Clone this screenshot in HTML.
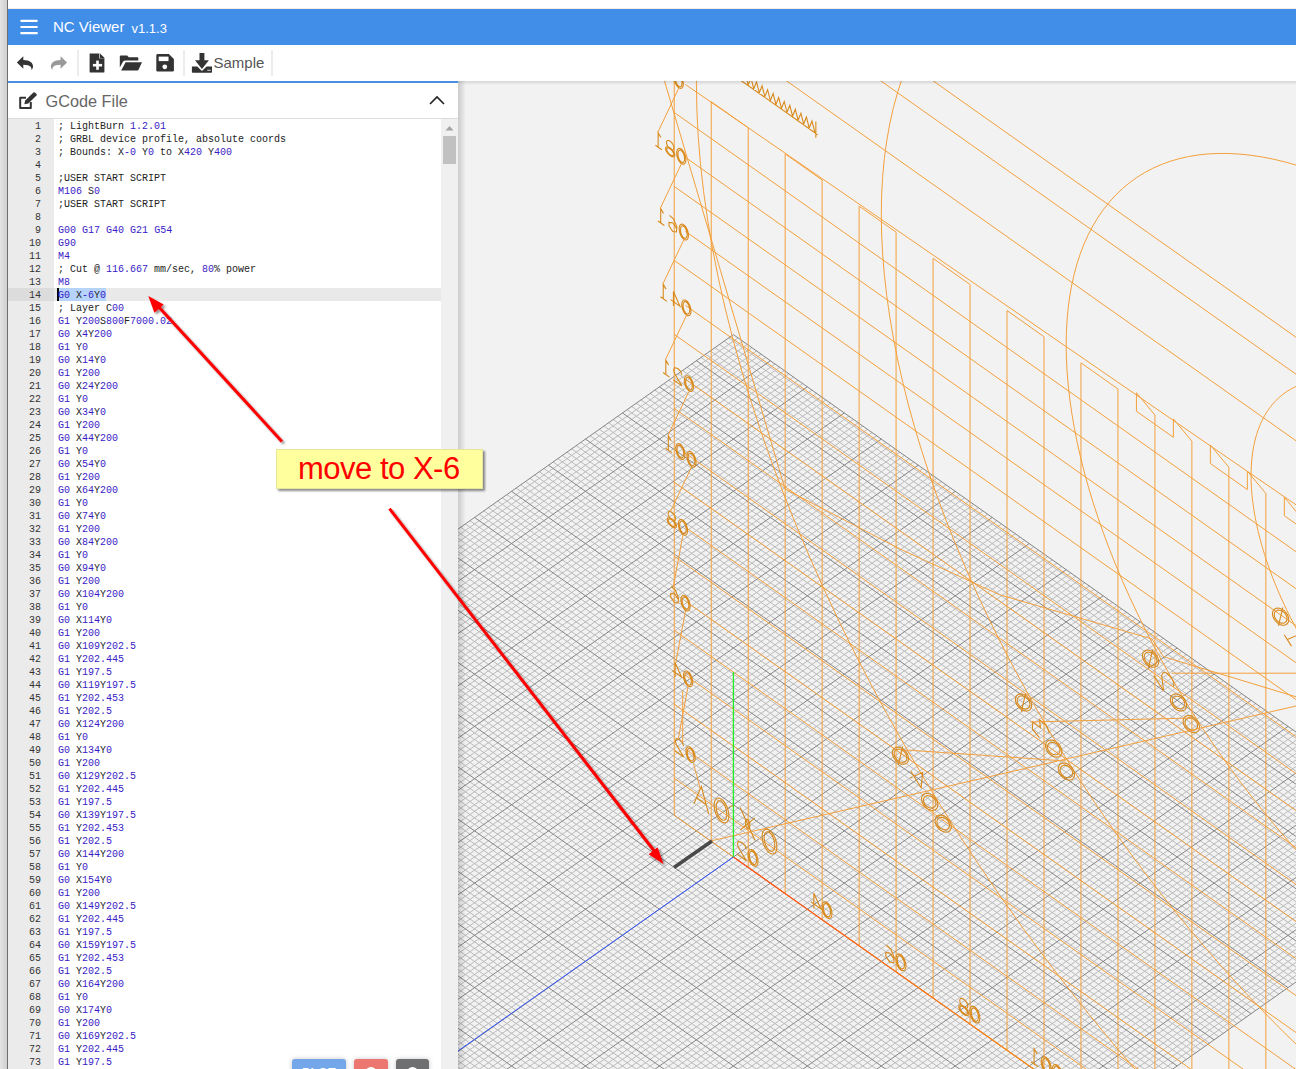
<!DOCTYPE html>
<html><head><meta charset="utf-8">
<style>
*{box-sizing:border-box}
html,body{margin:0;padding:0}
body{width:1296px;height:1069px;overflow:hidden;position:relative;background:#fff;font-family:"Liberation Sans",sans-serif}
.abs{position:absolute}
#strip{left:0;top:0;width:7px;height:1069px;background:linear-gradient(to right,#e4e4e4,#cfcfcf)}
#vline{left:7px;top:0;width:1px;height:1069px;background:#6e6e6e}
#header{left:8px;top:9px;width:1288px;height:36px;background:#418ee9}
#topw{left:8px;top:8px;width:1288px;height:1px;background:#f3ece4}
#toolbar{left:8px;top:45px;width:1288px;height:36px;background:#fff}
#view{left:0;top:0;width:1296px;height:1069px}
#panel{left:8px;top:81px;width:450px;height:988px;background:#fff;border-top:2px solid #4a90e2;}
#phead{left:0;top:0;width:450px;height:36px;border-bottom:1px solid #ddd}
#gutter{left:0;top:36px;width:46px;height:952px;background:#ebebeb}
#code{left:0;top:36px;width:433px;height:952px;overflow:hidden;font-family:"Liberation Mono",monospace;font-size:10px;color:#222}
#code div{height:13px;line-height:13px;position:relative;white-space:pre}
#code .ln{position:absolute;left:0;top:1px;width:33px;text-align:right;color:#333}
#code .tx{position:absolute;left:50px;top:1px}
#code b{font-weight:normal;color:#3a1cc6}
#code .act{background:#e9e9e9}
#code .act .ln{background:#dcdcdc;width:46px;padding-right:13px;top:0;height:13px;line-height:15px}
.sel{position:absolute;left:50px;top:0;width:48px;height:13px;background:#b6d3fb}
.cur{position:absolute;left:49px;top:0;width:1.5px;height:13px;background:#000}
#sbar{left:433px;top:36px;width:17px;height:952px;background:#f0f0f0}
#thumb{left:2px;top:17px;width:13px;height:28px;background:#c1c1c1}
.btn{top:976px;height:20px;border-radius:3px;box-shadow:0 0 5px rgba(0,0,0,0.22);overflow:hidden}
</style></head><body>
<div id="strip" class="abs"></div>
<div id="vline" class="abs"></div>
<div id="topw" class="abs"></div>
<div id="header" class="abs">
  <svg class="abs" style="left:11px;top:9px" width="22" height="20" viewBox="0 0 22 20"><g stroke="#fff" stroke-width="2.2" stroke-linecap="round"><path d="M2.3 2.8H17.8M2.3 9H17.8M2.3 15.2H17.8"/></g></svg>
  <div class="abs" style="left:45px;top:9px;color:#fff;font-size:15px;letter-spacing:0">NC Viewer</div>
  <div class="abs" style="left:123.5px;top:12px;color:#fff;font-size:13px">v1.1.3</div>
</div>
<div id="toolbar" class="abs">
<svg class="abs" style="left:0;top:0" width="300" height="36" viewBox="8 45 300 36">
  <g fill="#333">
   <!-- undo -->
   <path d="M16.9 62.6L23.3 56.3V59.9C29.5 60 33.2 62.5 33 66.8C32.9 68.2 32.2 69.4 31.3 69.9C31.9 67.4 30.7 64.9 23.3 64.8V68.8Z"/>
   <!-- new file -->
   <path d="M89.6 53.4H99.3L104.4 58.5V71.7Q104.4 72.6 103.5 72.6H90.5Q89.6 72.6 89.6 71.7Z"/>
   <!-- folder open -->
   <path d="M119.8 56.5Q119.8 55.4 120.9 55.4H127.2L128.8 57.3H137.5Q138.3 57.3 138.3 58.2V60.4H125.5Q123.8 60.4 123.1 61.6L119.8 67.5Z"/>
   <path d="M125.6 62.3H142L138.5 69.8Q138.2 70.4 137.5 70.4H121.2Z"/>
   <!-- save -->
   <path d="M156.3 55.4Q156.3 54.1 157.6 54.1H168.9L173.9 59V70.3Q173.9 71.6 172.6 71.6H157.6Q156.3 71.6 156.3 70.3Z"/>
   <!-- download -->
   <path d="M199.5 53H204.4V60.2H208.9L201.95 68.9L195 60.2H199.5Z"/>
   <path d="M191.9 66.5H197.3L201.95 71L206.6 66.5H212V72Q212 72.7 211.3 72.7H192.6Q191.9 72.7 191.9 72Z"/>
  </g>
  <g fill="#fff">
   <path d="M99.3 53.4V58.5H104.4Z" fill="#fff"/>
   <path d="M100 53.4L104.4 57.8V58.5H100Z" fill="#333"/>
   <rect x="96.2" y="60.6" width="2.6" height="9.2"/>
   <rect x="92.9" y="63.9" width="9.2" height="2.6"/>
   <rect x="158.7" y="56.6" width="9.8" height="4.5"/>
   <circle cx="164.8" cy="66.8" r="2.4"/>
   <rect x="207.5" y="69.7" width="1.2" height="1.2"/><rect x="209.3" y="69.7" width="1.2" height="1.2"/>
  </g>
  <path d="M67 62.6L60.6 56.3V59.9C54.4 60 50.7 62.5 50.9 66.8C51 68.2 51.7 69.4 52.6 69.9C52 67.4 53.2 64.9 60.6 64.8V68.8Z" fill="#999"/>
  <rect x="77" y="50" width="2" height="26" fill="#ececec"/>
  <rect x="183" y="50" width="2" height="26" fill="#ececec"/>
  <rect x="271" y="50" width="2" height="26" fill="#ececec"/>
  <text x="213.5" y="68" font-family="Liberation Sans" font-size="15" fill="#555">Sample</text>
</svg>
</div>
<svg id="view" class="abs" width="1296" height="1069" viewBox="0 0 1296 1069">
  <defs><clipPath id="vc"><rect x="458" y="81" width="838" height="988"/></clipPath>
  <clipPath id="gc"><path d="M733.4 335L1473 857L733.4 1379L-6.2 857Z"/></clipPath></defs>
  <rect x="458" y="81" width="838" height="988" fill="#f2f2f2"/>
  <g clip-path="url(#vc)">
    <path d="M728.78 337.87L1468.28 860.26M738.02 337.87L-1.48 860.26M724.16 341.13L1463.66 863.53M742.64 341.13L3.14 863.53M719.53 344.39L1459.03 866.79M747.27 344.39L7.77 866.79M714.91 347.66L1454.41 870.06M751.89 347.66L12.39 870.06M710.29 350.92L1449.79 873.33M756.51 350.92L17.01 873.33M705.67 354.19L1445.17 876.59M761.13 354.19L21.63 876.59M701.05 357.45L1440.55 879.86M765.75 357.45L26.25 879.86M691.8 363.98L1431.3 886.38M775 363.98L35.5 886.38M687.18 367.25L1426.68 889.65M779.62 367.25L40.12 889.65M682.56 370.51L1422.06 892.91M784.24 370.51L44.74 892.91M677.94 373.78L1417.44 896.18M788.86 373.78L49.36 896.18M673.32 377.04L1412.82 899.45M793.48 377.04L53.98 899.45M668.69 380.31L1408.19 902.71M798.11 380.31L58.61 902.71M664.07 383.57L1403.57 905.98M802.73 383.57L63.23 905.98M654.83 390.1L1394.33 912.5M811.97 390.1L72.47 912.5M650.21 393.37L1389.71 915.77M816.59 393.37L77.09 915.77M645.58 396.63L1385.08 919.03M821.22 396.63L81.72 919.03M640.96 399.9L1380.46 922.3M825.84 399.9L86.34 922.3M636.34 403.16L1375.84 925.57M830.46 403.16L90.96 925.57M631.72 406.43L1371.22 928.83M835.08 406.43L95.58 928.83M627.1 409.69L1366.6 932.1M839.7 409.69L100.2 932.1M617.85 416.22L1357.35 938.62M848.95 416.22L109.45 938.62M613.23 419.49L1352.73 941.89M853.57 419.49L114.07 941.89M608.61 422.75L1348.11 945.15M858.19 422.75L118.69 945.15M603.99 426.02L1343.49 948.42M862.81 426.02L123.31 948.42M599.37 429.28L1338.87 951.68M867.43 429.28L127.93 951.68M594.74 432.55L1334.24 954.95M872.06 432.55L132.56 954.95M590.12 435.81L1329.62 958.22M876.68 435.81L137.18 958.22M580.88 442.34L1320.38 964.75M885.92 442.34L146.42 964.75M576.26 445.61L1315.76 968.01M890.54 445.61L151.04 968.01M571.63 448.88L1311.13 971.27M895.17 448.88L155.67 971.27M567.01 452.14L1306.51 974.54M899.79 452.14L160.29 974.54M562.39 455.4L1301.89 977.81M904.41 455.4L164.91 977.81M557.77 458.67L1297.27 981.07M909.03 458.67L169.53 981.07M553.15 461.94L1292.65 984.34M913.65 461.94L174.15 984.34M543.9 468.46L1283.4 990.87M922.9 468.46L183.4 990.87M539.28 471.73L1278.78 994.13M927.52 471.73L188.02 994.13M534.66 475L1274.16 997.39M932.14 475L192.64 997.39M530.04 478.26L1269.54 1000.66M936.76 478.26L197.26 1000.66M525.42 481.52L1264.92 1003.92M941.38 481.52L201.88 1003.92M520.79 484.79L1260.29 1007.19M946.01 484.79L206.51 1007.19M516.17 488.06L1255.67 1010.46M950.63 488.06L211.13 1010.46M506.93 494.58L1246.43 1016.99M959.87 494.58L220.37 1016.99M502.31 497.85L1241.81 1020.25M964.49 497.85L224.99 1020.25M497.68 501.12L1237.18 1023.51M969.12 501.12L229.62 1023.51M493.06 504.38L1232.56 1026.78M973.74 504.38L234.24 1026.78M488.44 507.64L1227.94 1030.05M978.36 507.64L238.86 1030.05M483.82 510.91L1223.32 1033.31M982.98 510.91L243.48 1033.31M479.2 514.17L1218.7 1036.58M987.6 514.17L248.1 1036.58M469.95 520.7L1209.45 1043.11M996.85 520.7L257.35 1043.11M465.33 523.97L1204.83 1046.37M1001.47 523.97L261.97 1046.37M460.71 527.24L1200.21 1049.63M1006.09 527.24L266.59 1049.63M456.09 530.5L1195.59 1052.9M1010.71 530.5L271.21 1052.9M451.47 533.76L1190.97 1056.16M1015.33 533.76L275.83 1056.16M446.84 537.03L1186.34 1059.43M1019.96 537.03L280.46 1059.43M442.22 540.3L1181.72 1062.69M1024.58 540.3L285.08 1062.69M432.98 546.83L1172.48 1069.22M1033.82 546.83L294.32 1069.22M428.36 550.09L1167.86 1072.49M1038.44 550.09L298.94 1072.49M423.73 553.36L1163.23 1075.76M1043.07 553.36L303.57 1075.76M419.11 556.62L1158.61 1079.02M1047.69 556.62L308.19 1079.02M414.49 559.88L1153.99 1082.29M1052.31 559.88L312.81 1082.29M409.87 563.15L1149.37 1085.55M1056.93 563.15L317.43 1085.55M405.25 566.41L1144.75 1088.82M1061.55 566.41L322.05 1088.82M396 572.94L1135.5 1095.35M1070.8 572.94L331.3 1095.35M391.38 576.21L1130.88 1098.61M1075.42 576.21L335.92 1098.61M386.76 579.47L1126.26 1101.88M1080.04 579.47L340.54 1101.88M382.14 582.74L1121.64 1105.14M1084.66 582.74L345.16 1105.14M377.52 586L1117.02 1108.4M1089.28 586L349.78 1108.4M372.89 589.27L1112.39 1111.67M1093.91 589.27L354.41 1111.67M368.27 592.53L1107.77 1114.93M1098.53 592.53L359.03 1114.93M359.03 599.07L1098.53 1121.47M1107.77 599.07L368.27 1121.47M354.41 602.33L1093.91 1124.73M1112.39 602.33L372.89 1124.73M349.78 605.6L1089.28 1127.99M1117.02 605.6L377.52 1127.99M345.16 608.86L1084.66 1131.26M1121.64 608.86L382.14 1131.26M340.54 612.12L1080.04 1134.53M1126.26 612.12L386.76 1134.53M335.92 615.39L1075.42 1137.79M1130.88 615.39L391.38 1137.79M331.3 618.65L1070.8 1141.06M1135.5 618.65L396 1141.06M322.05 625.18L1061.55 1147.59M1144.75 625.18L405.25 1147.59M317.43 628.45L1056.93 1150.85M1149.37 628.45L409.87 1150.85M312.81 631.72L1052.31 1154.12M1153.99 631.72L414.49 1154.12M308.19 634.98L1047.69 1157.38M1158.61 634.98L419.11 1157.38M303.57 638.25L1043.07 1160.64M1163.23 638.25L423.73 1160.64M298.94 641.51L1038.44 1163.91M1167.86 641.51L428.36 1163.91M294.32 644.77L1033.82 1167.17M1172.48 644.77L432.98 1167.17M285.08 651.3L1024.58 1173.7M1181.72 651.3L442.22 1173.7M280.46 654.57L1019.96 1176.97M1186.34 654.57L446.84 1176.97M275.83 657.84L1015.33 1180.24M1190.97 657.84L451.47 1180.24M271.21 661.1L1010.71 1183.5M1195.59 661.1L456.09 1183.5M266.59 664.37L1006.09 1186.76M1200.21 664.37L460.71 1186.76M261.97 667.63L1001.47 1190.03M1204.83 667.63L465.33 1190.03M257.35 670.89L996.85 1193.3M1209.45 670.89L469.95 1193.3M248.1 677.42L987.6 1199.83M1218.7 677.42L479.2 1199.83M243.48 680.69L982.98 1203.09M1223.32 680.69L483.82 1203.09M238.86 683.95L978.36 1206.36M1227.94 683.95L488.44 1206.36M234.24 687.22L973.74 1209.62M1232.56 687.22L493.06 1209.62M229.62 690.49L969.12 1212.88M1237.18 690.49L497.68 1212.88M224.99 693.75L964.49 1216.15M1241.81 693.75L502.31 1216.15M220.37 697.01L959.87 1219.41M1246.43 697.01L506.93 1219.41M211.13 703.54L950.63 1225.94M1255.67 703.54L516.17 1225.94M206.51 706.81L946.01 1229.21M1260.29 706.81L520.79 1229.21M201.88 710.08L941.38 1232.47M1264.92 710.08L525.42 1232.47M197.26 713.34L936.76 1235.74M1269.54 713.34L530.04 1235.74M192.64 716.61L932.14 1239.01M1274.16 716.61L534.66 1239.01M188.02 719.87L927.52 1242.27M1278.78 719.87L539.28 1242.27M183.4 723.13L922.9 1245.54M1283.4 723.13L543.9 1245.54M174.15 729.66L913.65 1252.07M1292.65 729.66L553.15 1252.07M169.53 732.93L909.03 1255.33M1297.27 732.93L557.77 1255.33M164.91 736.19L904.41 1258.6M1301.89 736.19L562.39 1258.6M160.29 739.46L899.79 1261.86M1306.51 739.46L567.01 1261.86M155.67 742.73L895.17 1265.12M1311.13 742.73L571.63 1265.12M151.04 745.99L890.54 1268.39M1315.76 745.99L576.26 1268.39M146.42 749.25L885.92 1271.65M1320.38 749.25L580.88 1271.65M137.18 755.78L876.68 1278.18M1329.62 755.78L590.12 1278.18M132.56 759.05L872.06 1281.45M1334.24 759.05L594.74 1281.45M127.93 762.32L867.43 1284.72M1338.87 762.32L599.37 1284.72M123.31 765.58L862.81 1287.98M1343.49 765.58L603.99 1287.98M118.69 768.85L858.19 1291.24M1348.11 768.85L608.61 1291.24M114.07 772.11L853.57 1294.51M1352.73 772.11L613.23 1294.51M109.45 775.38L848.95 1297.78M1357.35 775.38L617.85 1297.78M100.2 781.9L839.7 1304.31M1366.6 781.9L627.1 1304.31M95.58 785.17L835.08 1307.57M1371.22 785.17L631.72 1307.57M90.96 788.43L830.46 1310.84M1375.84 788.43L636.34 1310.84M86.34 791.7L825.84 1314.1M1380.46 791.7L640.96 1314.1M81.72 794.97L821.22 1317.37M1385.08 794.97L645.58 1317.37M77.09 798.23L816.59 1320.63M1389.71 798.23L650.21 1320.63M72.47 801.5L811.97 1323.89M1394.33 801.5L654.83 1323.89M63.23 808.02L802.73 1330.42M1403.57 808.02L664.07 1330.42M58.61 811.29L798.11 1333.69M1408.19 811.29L668.69 1333.69M53.98 814.55L793.48 1336.95M1412.82 814.55L673.32 1336.95M49.36 817.82L788.86 1340.22M1417.44 817.82L677.94 1340.22M44.74 821.09L784.24 1343.49M1422.06 821.09L682.56 1343.49M40.12 824.35L779.62 1346.75M1426.68 824.35L687.18 1346.75M35.5 827.62L775 1350.02M1431.3 827.62L691.8 1350.02M26.25 834.14L765.75 1356.55M1440.55 834.14L701.05 1356.55M21.63 837.41L761.13 1359.81M1445.17 837.41L705.67 1359.81M17.01 840.67L756.51 1363.08M1449.79 840.67L710.29 1363.08M12.39 843.94L751.89 1366.34M1454.41 843.94L714.91 1366.34M7.77 847.21L747.27 1369.61M1459.03 847.21L719.53 1369.61M3.14 850.47L742.64 1372.87M1463.66 850.47L724.16 1372.87M-1.48 853.74L738.02 1376.13M1468.28 853.74L728.78 1376.13" stroke="#bababa" stroke-width="1" fill="none"/>
    <path d="M733.4 334.6L1472.9 857M733.4 334.6L-6.1 857M696.42 360.72L1435.92 883.12M770.38 360.72L30.88 883.12M659.45 386.84L1398.95 909.24M807.35 386.84L67.85 909.24M622.48 412.96L1361.97 935.36M844.32 412.96L104.83 935.36M585.5 439.08L1325 961.48M881.3 439.08L141.8 961.48M548.52 465.2L1288.03 987.6M918.27 465.2L178.77 987.6M511.55 491.32L1251.05 1013.72M955.25 491.32L215.75 1013.72M474.57 517.44L1214.07 1039.84M992.22 517.44L252.73 1039.84M437.6 543.56L1177.1 1065.96M1029.2 543.56L289.7 1065.96M400.62 569.68L1140.12 1092.08M1066.17 569.68L326.68 1092.08M363.65 595.8L1103.15 1118.2M1103.15 595.8L363.65 1118.2M326.68 621.92L1066.17 1144.32M1140.12 621.92L400.62 1144.32M289.7 648.04L1029.2 1170.44M1177.1 648.04L437.6 1170.44M252.73 674.16L992.22 1196.56M1214.07 674.16L474.57 1196.56M215.75 700.28L955.25 1222.68M1251.05 700.28L511.55 1222.68M178.77 726.4L918.27 1248.8M1288.03 726.4L548.52 1248.8M141.8 752.52L881.3 1274.92M1325 752.52L585.5 1274.92M104.83 778.64L844.32 1301.04M1361.97 778.64L622.48 1301.04M67.85 804.76L807.35 1327.16M1398.95 804.76L659.45 1327.16M30.88 830.88L770.38 1353.28M1435.92 830.88L696.42 1353.28M-6.1 857L733.4 1379.4M1472.9 857L733.4 1379.4" stroke="#858585" stroke-width="1" fill="none"/>
    <path d="M1620.8 736.78L1620.69 730.25L1620.35 723.57L1619.79 716.74L1619 709.78L1617.99 702.69L1616.76 695.48L1615.31 688.17L1613.64 680.75L1611.75 673.25L1609.65 665.66L1607.34 658L1604.82 650.28L1602.09 642.5L1599.16 634.68L1596.03 626.82L1592.71 618.94L1589.19 611.05L1585.49 603.14L1581.61 595.25L1577.55 587.36L1573.31 579.5L1568.91 571.67L1564.35 563.88L1559.63 556.15L1554.76 548.47L1549.75 540.87L1544.59 533.34L1539.31 525.9L1533.89 518.57L1528.36 511.33L1522.72 504.22L1516.97 497.22L1511.12 490.37L1505.18 483.65L1499.16 477.08L1493.05 470.67L1486.88 464.42L1480.65 458.35L1474.36 452.45L1468.03 446.75L1461.65 441.23L1455.25 435.92L1448.82 430.82L1442.38 425.93L1435.92 421.26L1429.47 416.81L1423.03 412.6L1416.6 408.62L1410.2 404.88L1403.82 401.39L1397.49 398.15L1391.2 395.16L1384.97 392.42L1378.8 389.95L1372.69 387.74L1366.67 385.8L1360.73 384.13L1354.88 382.72L1349.13 381.59L1343.49 380.73L1337.96 380.15L1332.54 379.84L1327.26 379.81L1322.1 380.05L1317.09 380.57L1312.22 381.37L1307.5 382.44L1302.94 383.78L1298.54 385.39L1294.3 387.27L1290.24 389.42L1286.36 391.83L1282.66 394.5L1279.14 397.43L1275.82 400.62L1272.69 404.05L1269.76 407.73L1267.03 411.66L1264.51 415.82L1262.2 420.21L1260.1 424.83L1258.21 429.67L1256.54 434.72L1255.09 439.99L1253.86 445.46L1252.85 451.12L1252.06 456.97L1251.5 463L1251.16 469.21L1251.05 475.58L1251.16 482.12L1251.5 488.8L1252.06 495.63L1252.85 502.59L1253.86 509.68L1255.09 516.88L1256.54 524.2L1258.21 531.61L1260.1 539.12L1262.2 546.71L1264.51 554.37L1267.03 562.09L1269.76 569.87L1272.69 577.69L1275.82 585.54L1279.14 593.42L1282.66 601.32L1286.36 609.22L1290.24 617.12L1294.3 625.01L1298.54 632.87L1302.94 640.7L1307.5 648.48L1312.22 656.22L1317.09 663.9L1322.1 671.5L1327.26 679.03L1332.54 686.46L1337.96 693.8L1343.49 701.03L1349.13 708.15L1354.88 715.14L1360.73 722L1366.67 728.72L1372.69 735.29L1378.8 741.7L1384.97 747.95L1391.2 754.02L1397.49 759.91L1403.82 765.62L1410.2 771.13L1416.6 776.44L1423.03 781.55L1429.47 786.44L1435.92 791.11L1442.38 795.55L1448.82 799.77L1455.25 803.75L1461.65 807.48L1468.03 810.98L1474.36 814.22L1480.65 817.21L1486.88 819.94L1493.05 822.41L1499.16 824.62L1505.18 826.57L1511.12 828.24L1516.97 829.64L1522.72 830.78L1528.36 831.63L1533.89 832.22L1539.31 832.52L1544.59 832.56L1549.75 832.31L1554.76 831.79L1559.63 831L1564.35 829.93L1568.91 828.59L1573.31 826.98L1577.55 825.1L1581.61 822.95L1585.49 820.54L1589.19 817.86L1592.71 814.93L1596.03 811.75L1599.16 808.31L1602.09 804.63L1604.82 800.71L1607.34 796.55L1609.65 792.15L1611.75 787.54L1613.64 782.7L1615.31 777.64L1616.76 772.38L1617.99 766.91L1619 761.25L1619.79 755.4L1620.35 749.36L1620.69 743.16L1620.8 736.78M1805.67 867.38L1805.45 854.32L1804.77 840.95L1803.65 827.29L1802.08 813.37L1800.06 799.19L1797.6 784.78L1794.69 770.15L1791.35 755.32L1787.58 740.31L1783.38 725.13L1778.75 709.82L1773.71 694.37L1768.25 678.82L1762.39 663.17L1756.14 647.46L1749.49 631.7L1742.46 615.91L1735.06 600.11L1727.29 584.31L1719.17 568.54L1710.7 552.81L1701.9 537.16L1692.77 521.58L1683.34 506.11L1673.6 490.76L1663.57 475.55L1653.26 460.5L1642.69 445.62L1631.86 430.95L1620.8 416.48L1609.51 402.25L1598.01 388.27L1586.32 374.55L1574.44 361.11L1562.39 347.97L1550.18 335.15L1537.84 322.66L1525.38 310.51L1512.8 298.72L1500.13 287.31L1487.38 276.28L1474.57 265.66L1461.72 255.45L1448.83 245.67L1435.92 236.33L1423.02 227.44L1410.13 219.01L1397.28 211.06L1384.47 203.58L1371.72 196.59L1359.05 190.11L1346.47 184.13L1334.01 178.66L1321.67 173.72L1309.46 169.3L1297.41 165.42L1285.53 162.07L1273.84 159.26L1262.34 157L1251.05 155.28L1239.99 154.12L1229.16 153.5L1218.59 153.44L1208.28 153.93L1198.25 154.97L1188.51 156.55L1179.08 158.69L1169.95 161.37L1161.15 164.6L1152.68 168.36L1144.56 172.65L1136.79 177.48L1129.39 182.82L1122.36 188.68L1115.71 195.05L1109.46 201.92L1103.6 209.29L1098.14 217.13L1093.1 225.45L1088.47 234.24L1084.27 243.48L1080.5 253.16L1077.16 263.27L1074.25 273.79L1071.79 284.73L1069.77 296.05L1068.2 307.75L1067.08 319.82L1066.4 332.23L1066.17 344.98L1066.4 358.05L1067.08 371.42L1068.2 385.07L1069.77 399L1071.79 413.17L1074.25 427.59L1077.16 442.22L1080.5 457.05L1084.27 472.06L1088.47 487.23L1093.1 502.55L1098.14 518L1103.6 533.55L1109.46 549.19L1115.71 564.9L1122.36 580.66L1129.39 596.46L1136.79 612.26L1144.56 628.06L1152.68 643.83L1161.15 659.55L1169.95 675.21L1179.08 690.79L1188.51 706.26L1198.25 721.61L1208.28 736.82L1218.59 751.87L1229.16 766.74L1239.99 781.42L1251.05 795.88L1262.34 810.12L1273.84 824.1L1285.53 837.82L1297.41 851.25L1309.46 864.39L1321.67 877.22L1334.01 889.71L1346.47 901.86L1359.05 913.64L1371.72 925.06L1384.47 936.08L1397.28 946.7L1410.13 956.91L1423.02 966.69L1435.92 976.03L1448.83 984.92L1461.72 993.35L1474.57 1001.31L1487.38 1008.79L1500.13 1015.77L1512.8 1022.26L1525.38 1028.24L1537.84 1033.7L1550.18 1038.65L1562.39 1043.06L1574.44 1046.95L1586.32 1050.3L1598.01 1053.1L1609.51 1055.37L1620.8 1057.08L1631.86 1058.25L1642.69 1058.86L1653.26 1058.93L1663.57 1058.44L1673.6 1057.4L1683.34 1055.81L1692.77 1053.68L1701.9 1050.99L1710.7 1047.77L1719.17 1044.01L1727.29 1039.71L1735.06 1034.89L1742.46 1029.55L1749.49 1023.68L1756.14 1017.31L1762.39 1010.44L1768.25 1003.08L1773.71 995.23L1778.75 986.91L1783.38 978.13L1787.58 968.89L1791.35 959.21L1794.69 949.1L1797.6 938.57L1800.06 927.64L1802.08 916.31L1803.65 904.61L1804.77 892.55L1805.45 880.13L1805.67 867.38M1990.55 997.98L1990.21 978.38L1989.2 958.33L1987.51 937.85L1985.15 916.96L1982.12 895.7L1978.43 874.08L1974.08 852.13L1969.06 829.89L1963.4 807.37L1957.1 784.61L1950.16 761.63L1942.6 738.46L1934.42 715.13L1925.63 691.67L1916.24 668.1L1906.27 644.46L1895.73 620.77L1884.63 597.07L1872.98 573.37L1860.79 549.72L1848.09 526.13L1834.89 502.64L1821.2 479.28L1807.04 456.07L1792.43 433.04L1777.39 410.23L1761.93 387.65L1746.07 365.35L1729.83 343.33L1713.24 321.63L1696.31 300.28L1679.06 279.31L1661.51 258.73L1643.69 238.58L1625.62 218.87L1607.31 199.63L1588.8 180.89L1570.1 162.67L1551.24 144.99L1532.23 127.87L1513.11 111.34L1493.9 95.4L1474.61 80.09L1455.28 65.42L1435.92 51.41L1416.57 38.07L1397.24 25.43L1377.95 13.49L1358.74 2.28L1339.62 -8.2L1320.61 -17.93L1301.75 -26.9L1283.05 -35.1L1264.54 -42.51L1246.23 -49.14L1228.16 -54.97L1210.34 -59.99L1192.79 -64.2L1175.54 -67.59L1158.61 -70.17L1142.02 -71.92L1125.78 -72.84L1109.92 -72.93L1094.46 -72.2L1079.42 -70.64L1064.81 -68.26L1050.65 -65.06L1036.96 -61.03L1023.76 -56.2L1011.06 -50.56L998.87 -44.11L987.22 -36.88L976.12 -28.86L965.58 -20.07L955.61 -10.51L946.22 -0.21L937.43 10.84L929.25 22.61L921.69 35.09L914.75 48.27L908.45 62.12L902.79 76.64L897.77 91.81L893.42 107.6L889.73 124L886.7 140.99L884.34 158.54L882.65 176.64L881.64 195.26L881.3 214.38L881.64 233.98L882.65 254.04L884.34 274.52L886.7 295.41L889.73 316.67L893.42 338.29L897.77 360.23L902.79 382.48L908.45 404.99L914.75 427.76L921.69 450.73L929.25 473.9L937.43 497.23L946.22 520.7L955.61 544.26L965.58 567.9L976.12 591.59L987.22 615.3L998.87 638.99L1011.06 662.65L1023.76 686.24L1036.96 709.72L1050.65 733.09L1064.81 756.3L1079.42 779.32L1094.46 802.14L1109.92 824.71L1125.78 847.02L1142.02 869.04L1158.61 890.73L1175.54 912.08L1192.79 933.06L1210.34 953.64L1228.16 973.79L1246.23 993.5L1264.54 1012.73L1283.05 1031.47L1301.75 1049.69L1320.61 1067.38L1339.62 1084.49L1358.74 1101.03L1377.95 1116.96L1397.24 1132.28L1416.57 1146.95L1435.92 1160.96L1455.28 1174.29L1474.61 1186.94L1493.9 1198.87L1513.11 1210.09L1532.23 1220.57L1551.24 1230.29L1570.1 1239.26L1588.8 1247.46L1607.31 1254.88L1625.62 1261.5L1643.69 1267.33L1661.51 1272.35L1679.06 1276.57L1696.31 1279.96L1713.24 1282.53L1729.83 1284.28L1746.07 1285.2L1761.93 1285.3L1777.39 1284.57L1792.43 1283.01L1807.04 1280.63L1821.2 1277.42L1834.89 1273.4L1848.09 1268.56L1860.79 1262.92L1872.98 1256.48L1884.63 1249.24L1895.73 1241.23L1906.27 1232.43L1916.24 1222.88L1925.63 1212.57L1934.42 1201.53L1942.6 1189.76L1950.16 1177.28L1957.1 1164.1L1963.4 1150.24L1969.06 1135.72L1974.08 1120.56L1978.43 1104.77L1982.12 1088.37L1985.15 1071.38L1987.51 1053.83L1989.2 1035.73L1990.21 1017.11L1990.55 997.98M2175.42 1128.58L2174.97 1102.45L2173.62 1075.71L2171.37 1048.4L2168.23 1020.55L2164.19 992.2L2159.27 963.38L2153.46 934.12L2146.78 904.46L2139.23 874.44L2130.83 844.09L2121.58 813.45L2111.49 782.56L2100.58 751.45L2088.86 720.17L2076.35 688.74L2063.06 657.22L2049 625.64L2034.19 594.03L2018.66 562.44L2002.41 530.89L1985.48 499.45L1967.88 468.13L1949.62 436.98L1930.75 406.03L1911.27 375.33L1891.21 344.91L1870.59 314.81L1849.45 285.07L1827.8 255.71L1805.67 226.78L1783.1 198.32L1760.1 170.35L1736.71 142.91L1712.95 116.04L1688.85 89.76L1664.44 64.12L1639.76 39.13L1614.83 14.84L1589.68 -8.74L1564.34 -31.57L1538.84 -53.61L1513.22 -74.86L1487.51 -95.27L1461.73 -114.83L1435.92 -133.52L1410.12 -151.3L1384.34 -168.16L1358.63 -184.07L1333.01 -199.02L1307.51 -212.99L1282.17 -225.97L1257.02 -237.92L1232.09 -248.86L1207.41 -258.74L1183 -267.58L1158.9 -275.35L1135.14 -282.05L1111.75 -287.66L1088.75 -292.19L1066.18 -295.62L1044.05 -297.95L1022.4 -299.18L1001.26 -299.31L980.64 -298.33L960.58 -296.25L941.1 -293.08L922.23 -288.8L903.97 -283.44L886.37 -276.99L869.44 -269.47L853.19 -260.88L837.66 -251.23L822.85 -240.54L808.79 -228.82L795.5 -216.08L782.99 -202.34L771.27 -187.61L760.36 -171.92L750.27 -155.27L741.02 -137.7L732.62 -119.23L725.07 -99.87L718.39 -79.65L712.58 -58.59L707.66 -36.73L703.62 -14.08L700.48 9.33L698.23 33.46L696.88 58.29L696.42 83.78L696.88 109.92L698.23 136.65L700.48 163.96L703.62 191.81L707.66 220.17L712.58 248.99L718.39 278.25L725.07 307.91L732.62 337.93L741.02 368.28L750.27 398.92L760.36 429.81L771.27 460.92L782.99 492.2L795.5 523.62L808.79 555.14L822.85 586.73L837.66 618.34L853.19 649.93L869.44 681.47L886.37 712.92L903.97 744.24L922.23 775.39L941.1 806.33L960.58 837.03L980.64 867.45L1001.26 897.55L1022.4 927.3L1044.05 956.65L1066.17 985.58L1088.75 1014.05L1111.75 1042.02L1135.14 1069.45L1158.9 1096.33L1183 1122.6L1207.41 1148.25L1232.09 1173.24L1257.02 1197.53L1282.17 1221.11L1307.51 1243.93L1333.01 1265.98L1358.63 1287.23L1384.34 1307.64L1410.12 1327.2L1435.92 1345.88L1461.73 1363.66L1487.51 1380.52L1513.22 1396.44L1538.84 1411.39L1564.34 1425.36L1589.68 1438.33L1614.83 1450.29L1639.76 1461.22L1664.44 1471.11L1688.85 1479.94L1712.95 1487.72L1736.71 1494.41L1760.1 1500.03L1783.1 1504.55L1805.67 1507.98L1827.8 1510.31L1849.45 1511.54L1870.59 1511.67L1891.21 1510.7L1911.27 1508.62L1930.75 1505.44L1949.62 1501.17L1967.88 1495.8L1985.48 1489.36L2002.41 1481.83L2018.66 1473.24L2034.19 1463.6L2049 1452.91L2063.06 1441.18L2076.35 1428.44L2088.86 1414.7L2100.58 1399.98L2111.49 1384.28L2121.58 1367.64L2130.83 1350.07L2139.23 1331.59L2146.78 1312.24L2153.46 1292.02L2159.27 1270.96L2164.19 1249.09L2168.23 1226.45L2171.37 1203.04L2173.62 1178.91L2174.97 1154.08L2175.42 1128.58M711.22 841.33L711.22 841.33M711.22 841.33L711.22 101.63M711.22 101.63L748.19 127.75M748.19 127.75L748.19 867.45M748.19 867.45L785.16 893.57M785.16 893.57L785.16 153.87M785.16 153.87L822.14 179.99M822.14 179.99L822.14 919.69M822.14 919.69L859.12 945.81M859.12 945.81L859.12 206.11M859.12 206.11L896.09 232.23M896.09 232.23L896.09 971.93M896.09 971.93L933.06 998.05M933.06 998.05L933.06 258.35M933.06 258.35L970.04 284.47M970.04 284.47L970.04 1024.17M970.04 1024.17L1007.01 1050.29M1007.01 1050.29L1007.01 310.59M1007.01 310.59L1043.99 336.71M1043.99 336.71L1043.99 1076.41M1043.99 1076.41L1080.96 1102.53M1080.96 1102.53L1080.96 362.83M1080.96 362.83L1117.94 388.95M1117.94 388.95L1117.94 1128.65M1117.94 1128.65L1154.91 1154.77M1154.91 1154.77L1154.91 415.07M1154.91 415.07L1136.43 392.76M1136.43 392.76L1136.43 411.25M1136.43 411.25L1173.4 437.37M1173.4 437.37L1173.4 418.88M1173.4 418.88L1191.89 441.19M1191.89 441.19L1191.89 1180.89M1191.89 1180.89L1228.87 1207.01M1228.87 1207.01L1228.87 467.31M1228.87 467.31L1210.38 445M1210.38 445L1210.38 463.49M1210.38 463.49L1247.35 489.61M1247.35 489.61L1247.35 471.12M1247.35 471.12L1265.84 493.43M1265.84 493.43L1265.84 1233.13M1265.84 1233.13L1302.82 1259.25M1302.82 1259.25L1302.82 519.55M1302.82 519.55L1284.33 497.24M1284.33 497.24L1284.33 515.73M1284.33 515.73L1321.3 541.85M1321.3 541.85L1321.3 523.36M1321.3 523.36L1339.79 545.67M1339.79 545.67L1339.79 1285.37M1339.79 1285.37L1376.76 1311.49M1376.76 1311.49L1376.76 571.79M1376.76 571.79L1358.28 549.48M1358.28 549.48L1358.28 567.97M1358.28 567.97L1395.25 594.09M1395.25 594.09L1395.25 575.6M1395.25 575.6L1413.74 597.91M1413.74 597.91L1413.74 1337.61M1413.74 1337.61L1450.71 1363.73M1450.71 1363.73L1450.71 624.03M1450.71 624.03L1432.23 601.72M1432.23 601.72L1432.23 620.21M1432.23 620.21L1469.2 646.33M1469.2 646.33L1469.2 627.84M1469.2 627.84L1487.69 650.15M1487.69 650.15L1487.69 1389.85M1487.69 1389.85L1524.66 1415.97M1524.66 1415.97L1524.66 676.27M1524.66 676.27L1506.18 653.96M1506.18 653.96L1506.18 672.45M1506.18 672.45L1543.15 698.57M1543.15 698.57L1543.15 680.08M1543.15 680.08L1561.64 702.39M1561.64 702.39L1561.64 1442.09M1561.64 1442.09L1598.61 1468.21M1598.61 1468.21L1598.61 728.51M1598.61 728.51L1580.13 706.2M1580.13 706.2L1580.13 724.69M1580.13 724.69L1617.1 750.81M1617.1 750.81L1617.1 732.32M1617.1 732.32L1635.59 754.63M1635.59 754.63L1635.59 1494.33M1635.59 1494.33L1672.57 1520.45M1672.57 1520.45L1672.57 780.75M1672.57 780.75L1654.08 758.44M1654.08 758.44L1654.08 776.93M1654.08 776.93L1691.05 803.05M1691.05 803.05L1691.05 784.56M1691.05 784.56L1709.54 806.87M1709.54 806.87L1709.54 1546.57M1709.54 1546.57L1746.51 1572.69M1746.51 1572.69L1746.51 832.99M1746.51 832.99L1728.03 810.68M1728.03 810.68L1728.03 829.17M1728.03 829.17L1765 855.29M1765 855.29L1765 836.8M1765 836.8L1783.49 859.11M1783.49 859.11L1783.49 1598.81M1783.49 1598.81L1820.46 1624.93M1820.46 1624.93L1820.46 885.23M1820.46 885.23L1801.98 862.92M1801.98 862.92L1801.98 881.41M1801.98 881.41L1838.95 907.53M1838.95 907.53L1838.95 889.04M1838.95 889.04L1857.44 911.35M1857.44 911.35L1857.44 1651.05M1857.44 1651.05L1894.41 1677.17M1894.41 1677.17L1894.41 937.47M674.24 815.21L2286.35 1954.04M674.24 778.22L2286.35 1917.06M685.33 749.07L2286.35 1880.07M674.24 704.25L2286.35 1843.09M685.33 675.1L2286.35 1806.1M674.24 630.28L2286.35 1769.12M685.33 601.13L2286.35 1732.13M674.24 556.31L2286.35 1695.14M685.33 527.16L2286.35 1658.16M674.24 482.34L2286.35 1621.17M685.33 453.19L2286.35 1584.19M674.24 408.37L2286.35 1547.2M685.33 379.22L2286.35 1510.22M674.24 334.4L2286.35 1473.23M685.33 305.25L2286.35 1436.25M674.24 260.43L2286.35 1399.26M685.33 231.28L2286.35 1362.28M674.24 186.46L2286.35 1325.3M685.33 157.31L2286.35 1288.31M674.24 112.49L2286.35 1251.32M685.33 84.45L2286.35 1186.6M674.24 815.21L674.24 -146.4M674.24 1.54L2286.35 1140.37M674.24 -65.04L2286.35 1073.8M674.24 -102.02L2286.35 1036.81" stroke="#f4a03c" stroke-width="1" fill="none"/>
    <path d="M683.65 746.13L682.26 742.26L679.49 739.58L676.26 738.74L675.33 740.97L676.26 744.51L683.65 756.95L674.87 750.74M685.96 751.37L686.12 749.61L686.58 748.2L687.31 747.22L688.27 746.75L689.39 746.82L690.58 747.42L691.78 748.51L692.89 750.02L693.85 751.84L694.59 753.85L695.05 755.92L695.2 757.9L695.05 759.65L694.59 761.07L693.85 762.04L692.89 762.51L691.78 762.44L690.58 761.84L689.39 760.75L688.27 759.25L687.31 757.42L686.58 755.41L686.12 753.35L685.96 751.37M687.26 752.28L687.37 750.87L687.7 749.71L688.23 748.89L688.92 748.46L689.72 748.45L690.58 748.86L691.44 749.67L692.25 750.81L692.94 752.21L693.46 753.78L693.8 755.41L693.91 756.98L693.8 758.4L693.46 759.55L692.94 760.37L692.25 760.8L691.44 760.81L690.58 760.4L689.72 759.6L688.92 758.45L688.23 757.05L687.7 755.48L687.37 753.85L687.26 752.28M675.09 676.93L675.09 662.51L681.56 677.17L672.32 670.64M683.41 675.6L683.57 673.84L684.03 672.43L684.76 671.45L685.72 670.98L686.84 671.05L688.03 671.65L689.23 672.74L690.34 674.25L691.3 676.07L692.03 678.08L692.5 680.15L692.65 682.13L692.5 683.88L692.03 685.29L691.3 686.27L690.34 686.74L689.23 686.67L688.03 686.07L686.84 684.98L685.72 683.47L684.76 681.65L684.03 679.64L683.57 677.57L683.41 675.6M684.7 676.51L684.82 675.1L685.15 673.94L685.68 673.12L686.37 672.69L687.17 672.68L688.03 673.09L688.89 673.9L689.7 675.04L690.38 676.44L690.91 678.01L691.25 679.64L691.36 681.21L691.25 682.62L690.91 683.78L690.38 684.6L689.7 685.03L688.89 685.04L688.03 684.63L687.17 683.82L686.37 682.68L685.68 681.28L685.15 679.71L684.82 678.08L684.7 676.51M671.15 586.48L675.31 590.14L678.55 598.19L678.09 602.91L674.39 602.46L670.69 596.97L670.69 593.36L674.39 593.81L678.09 599.31M680.86 599.82L681.02 598.07L681.48 596.65L682.21 595.68L683.17 595.21L684.28 595.28L685.48 595.88L686.68 596.97L687.79 598.47L688.75 600.3L689.48 602.31L689.94 604.37L690.1 606.35L689.94 608.11L689.48 609.52L688.75 610.5L687.79 610.97L686.68 610.9L685.48 610.3L684.28 609.21L683.17 607.7L682.21 605.88L681.48 603.87L681.02 601.8L680.86 599.82M682.15 600.74L682.27 599.32L682.6 598.17L683.13 597.35L683.82 596.92L684.62 596.91L685.48 597.32L686.34 598.12L687.14 599.27L687.83 600.67L688.36 602.24L688.69 603.87L688.81 605.44L688.69 606.85L688.36 608.01L687.83 608.83L687.14 609.26L686.34 609.27L685.48 608.86L684.62 608.05L683.82 606.91L683.13 605.51L682.6 603.94L682.27 602.31L682.15 600.74M668.14 513.55L668.27 512.63L668.63 511.95L669.22 511.56L669.99 511.48L670.88 511.72L671.84 512.27L672.79 513.08L673.69 514.1L674.45 515.26L675.04 516.48L675.41 517.68L675.53 518.77L675.41 519.69L675.04 520.37L674.45 520.76L673.69 520.84L672.79 520.6L671.84 520.06L670.88 519.25L669.99 518.23L669.22 517.07L668.63 515.85L668.27 514.65L668.14 513.55M667.21 519.53L667.37 518.64L667.83 518.02L668.57 517.73L669.53 517.79L670.64 518.19L671.84 518.9L673.03 519.88L674.15 521.06L675.1 522.35L675.84 523.68L676.3 524.94L676.46 526.06L676.3 526.96L675.84 527.57L675.1 527.86L674.15 527.8L673.03 527.4L671.84 526.69L670.64 525.71L669.53 524.54L668.57 523.24L667.83 521.92L667.37 520.65L667.21 519.53M668.32 520.32L668.44 519.65L668.79 519.21L669.35 519L670.08 519.06L670.93 519.37L671.84 519.91L672.75 520.65L673.59 521.54L674.32 522.51L674.88 523.5L675.23 524.45L675.35 525.28L675.23 525.94L674.88 526.39L674.32 526.59L673.59 526.54L672.75 526.23L671.84 525.68L670.93 524.94L670.08 524.05L669.35 523.08L668.79 522.09L668.44 521.15L668.32 520.32M678.31 524.05L678.46 522.3L678.93 520.88L679.66 519.91L680.62 519.44L681.73 519.5L682.93 520.1L684.13 521.19L685.24 522.7L686.2 524.52L686.93 526.54L687.39 528.6L687.55 530.58L687.39 532.34L686.93 533.75L686.2 534.72L685.24 535.19L684.13 535.13L682.93 534.53L681.73 533.44L680.62 531.93L679.66 530.11L678.93 528.09L678.46 526.03L678.31 524.05M679.6 524.96L679.71 523.55L680.05 522.39L680.58 521.57L681.27 521.14L682.07 521.13L682.93 521.55L683.79 522.35L684.59 523.49L685.28 524.9L685.81 526.47L686.14 528.09L686.26 529.67L686.14 531.08L685.81 532.24L685.28 533.06L684.59 533.49L683.79 533.5L682.93 533.09L682.07 532.28L681.27 531.14L680.58 529.73L680.05 528.16L679.71 526.54L679.6 524.96M671.13 440.69L668.36 435.84L668.36 450.27M672.06 452.88L665.59 448.31M675.76 448.28L675.91 446.52L676.38 445.11L677.11 444.13L678.07 443.66L679.18 443.73L680.38 444.33L681.57 445.42L682.69 446.93L683.65 448.75L684.38 450.76L684.84 452.83L685 454.81L684.84 456.56L684.38 457.98L683.65 458.95L682.69 459.42L681.57 459.35L680.38 458.76L679.18 457.66L678.07 456.16L677.11 454.33L676.38 452.32L675.91 450.26L675.76 448.28M677.05 449.19L677.16 447.78L677.5 446.62L678.02 445.8L678.71 445.37L679.52 445.36L680.38 445.77L681.24 446.58L682.04 447.72L682.73 449.13L683.26 450.69L683.59 452.32L683.71 453.89L683.59 455.31L683.26 456.46L682.73 457.29L682.04 457.72L681.24 457.72L680.38 457.31L679.52 456.51L678.71 455.36L678.02 453.96L677.5 452.39L677.16 450.77L677.05 449.19M686.85 456.11L687.01 454.36L687.47 452.95L688.2 451.97L689.16 451.5L690.27 451.57L691.47 452.17L692.67 453.26L693.78 454.77L694.74 456.59L695.47 458.6L695.93 460.67L696.09 462.64L695.93 464.4L695.47 465.81L694.74 466.79L693.78 467.26L692.67 467.19L691.47 466.59L690.27 465.5L689.16 463.99L688.2 462.17L687.47 460.16L687.01 458.09L686.85 456.11M688.14 457.03L688.26 455.62L688.59 454.46L689.12 453.64L689.81 453.21L690.61 453.2L691.47 453.61L692.33 454.41L693.13 455.56L693.82 456.96L694.35 458.53L694.68 460.16L694.8 461.73L694.68 463.14L694.35 464.3L693.82 465.12L693.13 465.55L692.33 465.56L691.47 465.15L690.61 464.34L689.81 463.2L689.12 461.8L688.59 460.23L688.26 458.6L688.14 457.03M668.58 364.91L665.81 360.07L665.81 374.49M669.51 377.11L663.04 372.53M681.99 375.1L680.6 371.24L677.83 368.56L674.59 367.72L673.67 369.95L674.59 373.49L681.99 385.92L673.2 379.72M684.3 380.34L684.45 378.59L684.92 377.17L685.65 376.2L686.61 375.73L687.72 375.8L688.92 376.39L690.12 377.49L691.23 378.99L692.19 380.82L692.92 382.83L693.38 384.89L693.54 386.87L693.38 388.63L692.92 390.04L692.19 391.02L691.23 391.49L690.12 391.42L688.92 390.82L687.72 389.73L686.61 388.22L685.65 386.4L684.92 384.39L684.45 382.32L684.3 380.34M685.59 381.26L685.7 379.84L686.04 378.69L686.57 377.86L687.26 377.43L688.06 377.43L688.92 377.84L689.78 378.64L690.58 379.79L691.27 381.19L691.8 382.76L692.13 384.38L692.25 385.96L692.13 387.37L691.8 388.53L691.27 389.35L690.58 389.78L689.78 389.79L688.92 389.38L688.06 388.57L687.26 387.43L686.57 386.02L686.04 384.46L685.7 382.83L685.59 381.26M666.03 289.14L663.26 284.3L663.26 298.72M666.96 301.33L660.49 296.76M673.43 305.9L673.43 291.48L679.9 306.15L670.65 299.62M681.75 304.57L681.9 302.81L682.37 301.4L683.1 300.43L684.06 299.96L685.17 300.02L686.37 300.62L687.56 301.71L688.68 303.22L689.64 305.04L690.37 307.06L690.83 309.12L690.99 311.1L690.83 312.85L690.37 314.27L689.64 315.24L688.68 315.71L687.56 315.65L686.37 315.05L685.17 313.96L684.06 312.45L683.1 310.63L682.37 308.61L681.9 306.55L681.75 304.57M683.04 305.48L683.15 304.07L683.49 302.91L684.01 302.09L684.7 301.66L685.51 301.65L686.37 302.06L687.23 302.87L688.03 304.01L688.72 305.42L689.25 306.99L689.58 308.61L689.7 310.19L689.58 311.6L689.25 312.76L688.72 313.58L688.03 314.01L687.23 314.02L686.37 313.6L685.51 312.8L684.7 311.66L684.01 310.25L683.49 308.68L683.15 307.06L683.04 305.48M663.48 213.37L660.71 208.53L660.71 222.95M664.4 225.56L657.93 220.99M669.49 215.45L673.65 219.11L676.88 227.16L676.42 231.89L672.72 231.44L669.03 225.94L669.03 222.34L672.72 222.78L676.42 228.28M679.19 228.8L679.35 227.04L679.81 225.63L680.55 224.65L681.51 224.18L682.62 224.25L683.82 224.85L685.01 225.94L686.13 227.45L687.08 229.27L687.82 231.28L688.28 233.35L688.44 235.33L688.28 237.08L687.82 238.5L687.08 239.47L686.13 239.94L685.01 239.87L683.82 239.27L682.62 238.18L681.51 236.68L680.55 234.85L679.81 232.84L679.35 230.78L679.19 228.8M680.49 229.71L680.6 228.3L680.93 227.14L681.46 226.32L682.15 225.89L682.96 225.88L683.82 226.29L684.68 227.1L685.48 228.24L686.17 229.64L686.7 231.21L687.03 232.84L687.14 234.41L687.03 235.83L686.7 236.98L686.17 237.8L685.48 238.23L684.68 238.24L683.82 237.83L682.96 237.03L682.15 235.88L681.46 234.48L680.93 232.91L680.6 231.28L680.49 229.71M660.93 137.6L658.16 132.75L658.16 147.18M661.85 149.79L655.38 145.22M666.48 142.52L666.6 141.61L666.97 140.93L667.56 140.54L668.32 140.46L669.22 140.7L670.17 141.24L671.13 142.05L672.02 143.07L672.79 144.23L673.37 145.45L673.74 146.65L673.87 147.75L673.74 148.67L673.37 149.35L672.79 149.74L672.02 149.82L671.13 149.57L670.17 149.03L669.22 148.22L668.32 147.2L667.56 146.04L666.97 144.82L666.6 143.62L666.48 142.52M665.55 148.51L665.71 147.61L666.17 147L666.9 146.71L667.86 146.77L668.98 147.16L670.17 147.88L671.37 148.85L672.48 150.03L673.44 151.33L674.18 152.65L674.64 153.92L674.79 155.04L674.64 155.93L674.18 156.55L673.44 156.83L672.48 156.78L671.37 156.38L670.17 155.67L668.98 154.69L667.86 153.51L666.9 152.22L666.17 150.89L665.71 149.63L665.55 148.51M666.66 149.29L666.78 148.63L667.13 148.18L667.69 147.98L668.42 148.03L669.26 148.34L670.17 148.89L671.08 149.63L671.93 150.51L672.66 151.49L673.21 152.48L673.57 153.42L673.69 154.25L673.57 154.92L673.21 155.36L672.66 155.57L671.93 155.51L671.08 155.2L670.17 154.66L669.26 153.92L668.42 153.03L667.69 152.06L667.13 151.07L666.78 150.12L666.66 149.29M676.64 153.03L676.8 151.27L677.26 149.86L678 148.88L678.95 148.41L680.07 148.48L681.27 149.08L682.46 150.17L683.58 151.68L684.53 153.5L685.27 155.51L685.73 157.58L685.89 159.56L685.73 161.31L685.27 162.72L684.53 163.7L683.58 164.17L682.46 164.1L681.27 163.5L680.07 162.41L678.95 160.9L678 159.08L677.26 157.07L676.8 155L676.64 153.03M677.94 153.94L678.05 152.53L678.38 151.37L678.91 150.55L679.6 150.12L680.4 150.11L681.27 150.52L682.13 151.33L682.93 152.47L683.62 153.87L684.15 155.44L684.48 157.07L684.59 158.64L684.48 160.05L684.15 161.21L683.62 162.03L682.93 162.46L682.13 162.47L681.27 162.06L680.4 161.25L679.6 160.11L678.91 158.71L678.38 157.14L678.05 155.51L677.94 153.94M660.69 64.18L659.3 60.31L656.53 57.63L653.29 56.79L652.37 59.02L653.29 62.56L660.69 75L651.91 68.79M663 69.42L663.16 67.66L663.62 66.25L664.35 65.27L665.31 64.8L666.43 64.87L667.62 65.47L668.82 66.56L669.93 68.07L670.89 69.89L671.62 71.9L672.09 73.97L672.24 75.95L672.09 77.7L671.62 79.12L670.89 80.09L669.93 80.56L668.82 80.49L667.62 79.89L666.43 78.8L665.31 77.3L664.35 75.47L663.62 73.46L663.16 71.39L663 69.42M664.29 70.33L664.41 68.92L664.74 67.76L665.27 66.94L665.96 66.51L666.76 66.5L667.62 66.91L668.48 67.72L669.29 68.86L669.97 70.26L670.5 71.83L670.84 73.46L670.95 75.03L670.84 76.45L670.5 77.6L669.97 78.42L669.29 78.85L668.48 78.86L667.62 78.45L666.76 77.65L665.96 76.5L665.27 75.1L664.74 73.53L664.41 71.9L664.29 70.33M674.09 77.25L674.25 75.5L674.71 74.08L675.45 73.11L676.4 72.64L677.52 72.71L678.71 73.31L679.91 74.4L681.02 75.9L681.98 77.73L682.72 79.74L683.18 81.8L683.34 83.78L683.18 85.54L682.72 86.95L681.98 87.93L681.02 88.4L679.91 88.33L678.71 87.73L677.52 86.64L676.4 85.13L675.45 83.31L674.71 81.3L674.25 79.23L674.09 77.25M675.39 78.17L675.5 76.75L675.83 75.6L676.36 74.78L677.05 74.35L677.85 74.34L678.71 74.75L679.58 75.55L680.38 76.7L681.07 78.1L681.6 79.67L681.93 81.3L682.04 82.87L681.93 84.28L681.6 85.44L681.07 86.26L680.38 86.69L679.58 86.7L678.71 86.29L677.85 85.48L677.05 84.34L676.36 82.94L675.83 81.37L675.5 79.74L675.39 78.17M746.4 849.45L744.9 845.35L741.9 842.48L738.41 841.53L737.41 843.86L738.41 847.59L746.4 860.82L736.91 854.12M748.01 854.37L748.18 852.53L748.67 851.05L749.47 850.04L750.5 849.57L751.7 849.66L753 850.32L754.29 851.49L755.49 853.1L756.53 855.03L757.32 857.16L757.82 859.34L757.99 861.43L757.82 863.27L757.32 864.74L756.53 865.75L755.49 866.23L754.29 866.14L753 865.48L751.7 864.31L750.5 862.7L749.47 860.77L748.67 858.64L748.18 856.46L748.01 854.37M749.4 855.36L749.53 853.88L749.88 852.67L750.46 851.81L751.2 851.38L752.07 851.38L753 851.83L753.93 852.7L754.79 853.92L755.54 855.41L756.11 857.06L756.47 858.78L756.59 860.44L756.47 861.92L756.11 863.13L755.54 863.98L754.79 864.42L753.93 864.41L753 863.96L752.07 863.1L751.2 861.88L750.46 860.39L749.88 858.73L749.53 857.02L749.4 855.36M813.86 908.47L813.86 893.31L820.85 908.86L810.86 901.81M821.96 906.61L822.13 904.77L822.62 903.29L823.42 902.28L824.45 901.81L825.65 901.9L826.95 902.56L828.24 903.73L829.44 905.34L830.48 907.27L831.27 909.4L831.77 911.58L831.94 913.67L831.77 915.51L831.27 916.98L830.48 917.99L829.44 918.47L828.24 918.38L826.95 917.72L825.65 916.55L824.45 914.94L823.42 913.01L822.62 910.88L822.13 908.7L821.96 906.61M823.35 907.6L823.48 906.12L823.83 904.91L824.41 904.05L825.15 903.62L826.02 903.62L826.95 904.07L827.88 904.94L828.74 906.16L829.49 907.65L830.06 909.3L830.42 911.02L830.54 912.68L830.42 914.16L830.06 915.37L829.49 916.22L828.74 916.66L827.88 916.65L826.95 916.2L826.02 915.34L825.15 914.12L824.41 912.63L823.83 910.97L823.48 909.26L823.35 907.6M886.31 945.25L890.8 949.18L894.3 957.72L893.8 962.67L889.8 962.12L885.81 956.27L885.81 952.48L889.8 953.03L893.8 958.88M895.91 958.85L896.08 957.01L896.57 955.53L897.37 954.52L898.4 954.05L899.6 954.14L900.9 954.8L902.19 955.97L903.39 957.58L904.43 959.51L905.22 961.64L905.72 963.82L905.89 965.91L905.72 967.75L905.22 969.22L904.43 970.23L903.39 970.71L902.19 970.62L900.9 969.96L899.6 968.79L898.4 967.18L897.37 965.25L896.57 963.12L896.08 960.94L895.91 958.85M897.3 959.84L897.43 958.36L897.78 957.15L898.36 956.29L899.1 955.86L899.97 955.86L900.9 956.31L901.83 957.18L902.69 958.4L903.44 959.89L904.01 961.54L904.37 963.26L904.49 964.92L904.37 966.4L904.01 967.61L903.44 968.46L902.69 968.9L901.83 968.89L900.9 968.44L899.97 967.58L899.1 966.36L898.36 964.87L897.78 963.21L897.43 961.5L897.3 959.84M959.76 1000.47L959.9 999.51L960.3 998.81L960.93 998.41L961.76 998.34L962.72 998.61L963.75 999.2L964.79 1000.07L965.75 1001.16L966.58 1002.39L967.21 1003.69L967.61 1004.96L967.75 1006.12L967.61 1007.08L967.21 1007.79L966.58 1008.18L965.75 1008.25L964.79 1007.98L963.75 1007.39L962.72 1006.52L961.76 1005.43L960.93 1004.2L960.3 1002.9L959.9 1001.63L959.76 1000.47M958.76 1006.74L958.93 1005.8L959.43 1005.17L960.22 1004.88L961.26 1004.96L962.46 1005.4L963.75 1006.18L965.05 1007.23L966.25 1008.49L967.28 1009.87L968.08 1011.28L968.58 1012.62L968.75 1013.8L968.58 1014.74L968.08 1015.37L967.28 1015.66L966.25 1015.58L965.05 1015.14L963.75 1014.36L962.46 1013.31L961.26 1012.05L960.22 1010.67L959.43 1009.26L958.93 1007.92L958.76 1006.74M959.96 1007.59L960.09 1006.9L960.47 1006.43L961.07 1006.23L961.86 1006.3L962.77 1006.65L963.75 1007.24L964.74 1008.03L965.65 1008.98L966.44 1010.02L967.04 1011.08L967.42 1012.07L967.55 1012.95L967.42 1013.64L967.04 1014.11L966.44 1014.31L965.65 1014.24L964.74 1013.89L963.75 1013.3L962.77 1012.51L961.86 1011.56L961.07 1010.52L960.47 1009.47L960.09 1008.47L959.96 1007.59M969.86 1011.09L970.03 1009.25L970.52 1007.77L971.32 1006.76L972.35 1006.29L973.55 1006.38L974.85 1007.04L976.14 1008.21L977.34 1009.82L978.38 1011.75L979.17 1013.88L979.67 1016.06L979.84 1018.15L979.67 1019.99L979.17 1021.46L978.38 1022.47L977.34 1022.95L976.14 1022.86L974.85 1022.2L973.55 1021.03L972.35 1019.42L971.32 1017.49L970.52 1015.36L970.03 1013.18L969.86 1011.09M971.25 1012.08L971.38 1010.6L971.73 1009.39L972.31 1008.53L973.05 1008.1L973.92 1008.1L974.85 1008.55L975.78 1009.42L976.64 1010.64L977.39 1012.13L977.96 1013.78L978.32 1015.5L978.44 1017.16L978.32 1018.64L977.96 1019.85L977.39 1020.7L976.64 1021.14L975.78 1021.13L974.85 1020.68L973.92 1019.82L973.05 1018.6L972.31 1017.11L971.73 1015.45L971.38 1013.74L971.25 1012.08M1037.11 1054.06L1034.12 1048.91L1034.12 1064.07M1038.11 1066.89L1031.12 1061.96M1041.22 1061.5L1041.39 1059.66L1041.89 1058.19L1042.68 1057.18L1043.71 1056.7L1044.92 1056.79L1046.21 1057.45L1047.5 1058.62L1048.7 1060.23L1049.74 1062.16L1050.53 1064.29L1051.03 1066.47L1051.2 1068.56L1051.03 1070.4L1050.53 1071.88L1049.74 1072.89L1048.7 1073.36L1047.5 1073.27L1046.21 1072.61L1044.92 1071.44L1043.71 1069.83L1042.68 1067.9L1041.89 1065.77L1041.39 1063.59L1041.22 1061.5M1042.61 1062.49L1042.74 1061.01L1043.1 1059.8L1043.67 1058.95L1044.41 1058.51L1045.28 1058.51L1046.21 1058.96L1047.14 1059.83L1048.01 1061.05L1048.75 1062.54L1049.32 1064.2L1049.68 1065.91L1049.8 1067.57L1049.68 1069.05L1049.32 1070.26L1048.75 1071.11L1048.01 1071.55L1047.14 1071.55L1046.21 1071.1L1045.28 1070.23L1044.41 1069.01L1043.67 1067.52L1043.1 1065.86L1042.74 1064.15L1042.61 1062.49M1052.31 1069.34L1052.48 1067.5L1052.98 1066.02L1053.77 1065.01L1054.81 1064.54L1056.01 1064.63L1057.3 1065.28L1058.59 1066.46L1059.8 1068.06L1060.83 1070L1061.62 1072.13L1062.12 1074.31L1062.29 1076.39L1062.12 1078.23L1061.62 1079.71L1060.83 1080.72L1059.8 1081.2L1058.59 1081.1L1057.3 1080.45L1056.01 1079.28L1054.81 1077.67L1053.77 1075.73L1052.98 1073.6L1052.48 1071.42L1052.31 1069.34M1053.71 1070.33L1053.83 1068.84L1054.19 1067.63L1054.76 1066.78L1055.5 1066.34L1056.37 1066.35L1057.3 1066.8L1058.23 1067.66L1059.1 1068.88L1059.84 1070.37L1060.41 1072.03L1060.77 1073.75L1060.89 1075.41L1060.77 1076.89L1060.41 1078.1L1059.84 1078.95L1059.1 1079.39L1058.23 1079.38L1057.3 1078.93L1056.37 1078.07L1055.5 1076.85L1054.76 1075.36L1054.19 1073.7L1053.83 1071.98L1053.71 1070.33M1111.06 1106.3L1108.07 1101.15L1108.07 1116.31M1112.06 1119.13L1105.07 1114.2M1124.65 1116.65L1123.15 1112.56L1120.16 1109.69L1116.66 1108.74L1115.67 1111.06L1116.66 1114.8L1124.65 1128.03L1115.17 1121.33M1126.26 1121.58L1126.43 1119.74L1126.93 1118.26L1127.72 1117.25L1128.76 1116.78L1129.96 1116.87L1131.25 1117.52L1132.54 1118.7L1133.75 1120.3L1134.78 1122.24L1135.57 1124.37L1136.07 1126.55L1136.24 1128.63L1136.07 1130.47L1135.57 1131.95L1134.78 1132.96L1133.75 1133.44L1132.54 1133.34L1131.25 1132.69L1129.96 1131.52L1128.76 1129.91L1127.72 1127.97L1126.93 1125.84L1126.43 1123.66L1126.26 1121.58M1127.66 1122.57L1127.78 1121.08L1128.14 1119.87L1128.71 1119.02L1129.45 1118.58L1130.32 1118.59L1131.25 1119.04L1132.18 1119.9L1133.05 1121.12L1133.79 1122.61L1134.36 1124.27L1134.72 1125.99L1134.84 1127.65L1134.72 1129.13L1134.36 1130.34L1133.79 1131.19L1133.05 1131.63L1132.18 1131.62L1131.25 1131.17L1130.32 1130.31L1129.45 1129.09L1128.71 1127.6L1128.14 1125.94L1127.78 1124.22L1127.66 1122.57M1185.01 1158.54L1182.02 1153.39L1182.02 1168.55M1186.01 1171.37L1179.02 1166.44M1192.11 1175.68L1192.11 1160.52L1199.1 1176.07L1189.12 1169.02M1200.21 1173.82L1200.38 1171.98L1200.88 1170.5L1201.67 1169.49L1202.71 1169.02L1203.91 1169.11L1205.2 1169.76L1206.49 1170.94L1207.7 1172.54L1208.73 1174.48L1209.52 1176.61L1210.02 1178.79L1210.19 1180.87L1210.02 1182.71L1209.52 1184.19L1208.73 1185.2L1207.7 1185.68L1206.49 1185.58L1205.2 1184.93L1203.91 1183.76L1202.71 1182.15L1201.67 1180.21L1200.88 1178.08L1200.38 1175.9L1200.21 1173.82M1201.61 1174.81L1201.73 1173.32L1202.09 1172.11L1202.66 1171.26L1203.4 1170.82L1204.27 1170.83L1205.2 1171.28L1206.13 1172.14L1207 1173.36L1207.74 1174.85L1208.31 1176.51L1208.67 1178.23L1208.79 1179.89L1208.67 1181.37L1208.31 1182.58L1207.74 1183.43L1207 1183.87L1206.13 1183.86L1205.2 1183.41L1204.27 1182.55L1203.4 1181.33L1202.66 1179.84L1202.09 1178.18L1201.73 1176.46L1201.61 1174.81M1258.96 1210.78L1255.97 1205.63L1255.97 1220.79M1259.96 1223.61L1252.97 1218.68M1264.56 1212.46L1269.06 1216.39L1272.55 1224.92L1272.05 1229.88L1268.06 1229.33L1264.07 1223.48L1264.07 1219.69L1268.06 1220.23L1272.05 1226.09M1274.16 1226.06L1274.33 1224.22L1274.83 1222.74L1275.62 1221.73L1276.66 1221.26L1277.86 1221.35L1279.15 1222L1280.44 1223.18L1281.65 1224.78L1282.68 1226.72L1283.47 1228.85L1283.97 1231.03L1284.14 1233.11L1283.97 1234.95L1283.47 1236.43L1282.68 1237.44L1281.65 1237.92L1280.44 1237.82L1279.15 1237.17L1277.86 1236L1276.66 1234.39L1275.62 1232.45L1274.83 1230.32L1274.33 1228.14L1274.16 1226.06M1275.56 1227.05L1275.68 1225.56L1276.04 1224.35L1276.61 1223.5L1277.35 1223.06L1278.22 1223.07L1279.15 1223.52L1280.08 1224.38L1280.95 1225.6L1281.69 1227.09L1282.26 1228.75L1282.62 1230.47L1282.74 1232.13L1282.62 1233.61L1282.26 1234.82L1281.69 1235.67L1280.95 1236.11L1280.08 1236.1L1279.15 1235.65L1278.22 1234.79L1277.35 1233.57L1276.61 1232.08L1276.04 1230.42L1275.68 1228.7L1275.56 1227.05M1332.91 1263.02L1329.92 1257.87L1329.92 1273.03M1333.91 1275.85L1326.92 1270.92M1338.02 1267.68L1338.15 1266.72L1338.55 1266.01L1339.18 1265.61L1340.01 1265.55L1340.97 1265.82L1342.01 1266.41L1343.04 1267.28L1344.01 1268.37L1344.83 1269.6L1345.47 1270.9L1345.87 1272.17L1346 1273.32L1345.87 1274.29L1345.47 1274.99L1344.83 1275.39L1344.01 1275.46L1343.04 1275.19L1342.01 1274.6L1340.97 1273.73L1340.01 1272.64L1339.18 1271.4L1338.55 1270.11L1338.15 1268.84L1338.02 1267.68M1337.02 1273.95L1337.19 1273.01L1337.69 1272.38L1338.48 1272.09L1339.51 1272.17L1340.72 1272.61L1342.01 1273.38L1343.3 1274.44L1344.5 1275.7L1345.54 1277.08L1346.33 1278.48L1346.83 1279.82L1347 1281L1346.83 1281.94L1346.33 1282.58L1345.54 1282.87L1344.5 1282.79L1343.3 1282.35L1342.01 1281.57L1340.72 1280.52L1339.51 1279.26L1338.48 1277.88L1337.69 1276.47L1337.19 1275.13L1337.02 1273.95M1338.21 1274.8L1338.34 1274.1L1338.72 1273.64L1339.33 1273.44L1340.11 1273.51L1341.03 1273.86L1342.01 1274.45L1342.99 1275.24L1343.91 1276.19L1344.69 1277.23L1345.29 1278.28L1345.67 1279.28L1345.8 1280.16L1345.67 1280.85L1345.29 1281.32L1344.69 1281.52L1343.91 1281.44L1342.99 1281.1L1342.01 1280.51L1341.03 1279.71L1340.11 1278.76L1339.33 1277.73L1338.72 1276.67L1338.34 1275.67L1338.21 1274.8M1348.11 1278.3L1348.28 1276.46L1348.78 1274.98L1349.57 1273.97L1350.61 1273.5L1351.81 1273.59L1353.1 1274.24L1354.39 1275.42L1355.6 1277.02L1356.63 1278.96L1357.42 1281.09L1357.92 1283.27L1358.09 1285.35L1357.92 1287.19L1357.42 1288.67L1356.63 1289.68L1355.6 1290.16L1354.39 1290.06L1353.1 1289.41L1351.81 1288.24L1350.61 1286.63L1349.57 1284.69L1348.78 1282.56L1348.28 1280.38L1348.11 1278.3M1349.51 1279.29L1349.63 1277.8L1349.99 1276.59L1350.56 1275.74L1351.3 1275.3L1352.17 1275.31L1353.1 1275.76L1354.03 1276.62L1354.9 1277.84L1355.64 1279.33L1356.21 1280.99L1356.57 1282.71L1356.69 1284.37L1356.57 1285.85L1356.21 1287.06L1355.64 1287.91L1354.9 1288.35L1354.03 1288.34L1353.1 1287.89L1352.17 1287.03L1351.3 1285.81L1350.56 1284.32L1349.99 1282.66L1349.63 1280.94L1349.51 1279.29M895.33 747.58L897.14 747.13L899.17 747.27L901.3 747.98L903.37 749.22L905.25 750.9L906.8 752.91L907.92 755.11L908.53 757.36L908.6 759.49L908.11 761.36L907.11 762.85L905.65 763.85L903.84 764.3L901.81 764.16L899.68 763.45L897.61 762.21L895.73 760.53L894.18 758.52L893.06 756.32L892.45 754.07L892.38 751.94L892.87 750.07L893.87 748.58L895.33 747.58M896.57 749.53L898.01 749.16L899.61 749.24L901.28 749.76L902.9 750.68L904.35 751.95L905.54 753.47L906.38 755.15L906.82 756.87L906.83 758.5L906.41 759.95L905.59 761.11L904.41 761.9L902.97 762.27L901.37 762.19L899.7 761.67L898.08 760.75L896.63 759.48L895.44 757.96L894.6 756.28L894.16 754.56L894.15 752.93L894.57 751.48L895.39 750.32L896.57 749.53M898.31 765.03L902.67 746.4M910.12 777.97L922.74 772.37L921.14 787.68L910.81 771.41M924.54 793.73L926.35 793.29L928.38 793.42L930.51 794.14L932.58 795.38L934.46 797.06L936.01 799.07L937.13 801.27L937.74 803.51L937.81 805.64L937.32 807.51L936.32 809L934.86 810.01L933.05 810.45L931.02 810.32L928.89 809.6L926.82 808.36L924.94 806.68L923.39 804.67L922.27 802.47L921.66 800.23L921.59 798.1L922.08 796.22L923.08 794.74L924.54 793.73M925.98 796.01L927.42 795.63L929 795.68L930.64 796.14L932.21 797L933.61 798.19L934.75 799.63L935.54 801.22L935.93 802.86L935.9 804.43L935.44 805.82L934.6 806.95L933.42 807.73L931.98 808.11L930.4 808.06L928.76 807.6L927.19 806.74L925.79 805.55L924.65 804.11L923.86 802.52L923.47 800.88L923.5 799.31L923.96 797.92L924.8 796.79L925.98 796.01M938.03 815.47L939.84 815.02L941.88 815.16L944.01 815.87L946.08 817.11L947.95 818.8L949.5 820.81L950.62 823.01L951.24 825.25L951.31 827.38L950.82 829.25L949.82 830.74L948.36 831.74L946.55 832.19L944.51 832.06L942.39 831.34L940.32 830.1L938.44 828.42L936.89 826.41L935.77 824.21L935.15 821.97L935.09 819.84L935.57 817.96L936.58 816.48L938.03 815.47M939.48 817.75L940.91 817.37L942.5 817.41L944.14 817.88L945.71 818.74L947.11 819.93L948.24 821.37L949.03 822.96L949.42 824.6L949.39 826.17L948.94 827.56L948.09 828.69L946.91 829.47L945.48 829.85L943.89 829.8L942.26 829.34L940.69 828.48L939.28 827.29L938.15 825.85L937.36 824.26L936.97 822.62L937 821.05L937.45 819.66L938.3 818.53L939.48 817.75M1018.34 694.31L1020.15 693.86L1022.19 694L1024.32 694.71L1026.39 695.95L1028.26 697.63L1029.81 699.64L1030.93 701.84L1031.55 704.08L1031.62 706.21L1031.13 708.09L1030.12 709.58L1028.67 710.58L1026.86 711.03L1024.82 710.89L1022.7 710.18L1020.63 708.94L1018.75 707.26L1017.2 705.25L1016.08 703.04L1015.46 700.8L1015.4 698.67L1015.88 696.8L1016.89 695.31L1018.34 694.31M1019.58 696.26L1021.02 695.89L1022.63 695.97L1024.3 696.49L1025.91 697.41L1027.36 698.68L1028.55 700.2L1029.4 701.88L1029.84 703.59L1029.85 705.23L1029.43 706.68L1028.6 707.84L1027.43 708.63L1025.99 709L1024.38 708.92L1022.71 708.4L1021.1 707.48L1019.65 706.21L1018.46 704.68L1017.62 703.01L1017.17 701.29L1017.16 699.66L1017.59 698.21L1018.41 697.05L1019.58 696.26M1021.33 711.75L1025.68 693.13M1049.5 733.1L1046.12 725.21L1039.47 719.83L1040.44 727.74L1032.64 721.82L1032.47 729.19L1039.41 737.58M1048.55 740.43L1050.36 739.98L1052.4 740.12L1054.52 740.83L1056.6 742.07L1058.47 743.75L1060.02 745.76L1061.14 747.96L1061.76 750.2L1061.82 752.33L1061.34 754.21L1060.33 755.7L1058.88 756.7L1057.07 757.15L1055.03 757.01L1052.91 756.3L1050.83 755.06L1048.96 753.38L1047.41 751.37L1046.29 749.16L1045.67 746.92L1045.6 744.79L1046.09 742.92L1047.1 741.43L1048.55 740.43M1050 742.71L1051.43 742.32L1053.02 742.37L1054.65 742.84L1056.23 743.69L1057.63 744.88L1058.76 746.32L1059.55 747.91L1059.94 749.55L1059.91 751.12L1059.46 752.52L1058.61 753.64L1057.43 754.42L1056 754.8L1054.41 754.76L1052.77 754.29L1051.2 753.43L1049.8 752.24L1048.67 750.8L1047.88 749.21L1047.49 747.58L1047.52 746.01L1047.97 744.61L1048.82 743.49L1050 742.71M1061.23 763.44L1063.04 762.99L1065.08 763.13L1067.21 763.84L1069.28 765.08L1071.15 766.76L1072.7 768.77L1073.83 770.98L1074.44 773.22L1074.51 775.35L1074.02 777.22L1073.02 778.71L1071.56 779.71L1069.75 780.16L1067.71 780.02L1065.59 779.31L1063.52 778.07L1061.64 776.39L1060.09 774.38L1058.97 772.18L1058.35 769.94L1058.29 767.81L1058.77 765.93L1059.78 764.44L1061.23 763.44M1062.68 765.72L1064.11 765.34L1065.7 765.38L1067.34 765.85L1068.91 766.71L1070.31 767.9L1071.44 769.34L1072.23 770.93L1072.62 772.56L1072.59 774.13L1072.14 775.53L1071.29 776.65L1070.11 777.43L1068.68 777.82L1067.09 777.77L1065.46 777.3L1063.89 776.45L1062.49 775.26L1061.35 773.82L1060.56 772.23L1060.17 770.59L1060.2 769.02L1060.66 767.62L1061.5 766.5L1062.68 765.72M1145.43 650.57L1147.23 650.12L1149.27 650.26L1151.4 650.97L1153.47 652.21L1155.34 653.89L1156.9 655.9L1158.02 658.1L1158.63 660.34L1158.7 662.47L1158.21 664.35L1157.21 665.84L1155.75 666.84L1153.94 667.29L1151.91 667.15L1149.78 666.44L1147.71 665.2L1145.83 663.51L1144.28 661.5L1143.16 659.3L1142.55 657.06L1142.48 654.93L1142.96 653.06L1143.97 651.57L1145.43 650.57M1146.67 652.52L1148.11 652.15L1149.71 652.23L1151.38 652.74L1153 653.67L1154.45 654.94L1155.63 656.46L1156.48 658.14L1156.92 659.85L1156.93 661.49L1156.51 662.94L1155.68 664.09L1154.51 664.89L1153.07 665.25L1151.46 665.18L1149.8 664.66L1148.18 663.73L1146.73 662.47L1145.54 660.94L1144.7 659.27L1144.26 657.55L1144.25 655.91L1144.67 654.47L1145.49 653.31L1146.67 652.52M1148.41 668.01L1152.77 649.39M1173.1 686.85L1174.08 683.29L1171.61 678.13L1166.74 673L1163.18 672.49L1161.69 675.24L1163.64 691.06L1153.84 675.6M1173.34 694.33L1175.15 693.88L1177.19 694.02L1179.31 694.73L1181.39 695.97L1183.26 697.65L1184.81 699.66L1185.93 701.86L1186.55 704.1L1186.62 706.23L1186.13 708.11L1185.12 709.6L1183.67 710.6L1181.86 711.05L1179.82 710.91L1177.7 710.2L1175.62 708.96L1173.75 707.27L1172.2 705.26L1171.08 703.06L1170.46 700.82L1170.39 698.69L1170.88 696.82L1171.89 695.33L1173.34 694.33M1174.79 696.6L1176.22 696.22L1177.81 696.27L1179.44 696.74L1181.02 697.59L1182.42 698.78L1183.55 700.22L1184.34 701.81L1184.73 703.45L1184.7 705.02L1184.25 706.41L1183.4 707.54L1182.22 708.32L1180.79 708.7L1179.2 708.66L1177.57 708.19L1175.99 707.33L1174.59 706.14L1173.46 704.7L1172.67 703.11L1172.28 701.48L1172.31 699.91L1172.76 698.51L1173.61 697.38L1174.79 696.6M1186.14 715.94L1187.94 715.49L1189.98 715.63L1192.11 716.34L1194.18 717.58L1196.05 719.26L1197.61 721.27L1198.73 723.47L1199.34 725.72L1199.41 727.85L1198.92 729.72L1197.92 731.21L1196.46 732.21L1194.65 732.66L1192.62 732.52L1190.49 731.81L1188.42 730.57L1186.54 728.89L1184.99 726.88L1183.87 724.68L1183.26 722.43L1183.19 720.3L1183.67 718.43L1184.68 716.94L1186.14 715.94M1187.58 718.22L1189.01 717.84L1190.6 717.88L1192.24 718.35L1193.81 719.21L1195.21 720.39L1196.34 721.83L1197.13 723.43L1197.53 725.06L1197.49 726.63L1197.04 728.03L1196.19 729.15L1195.02 729.93L1193.58 730.31L1191.99 730.27L1190.36 729.8L1188.79 728.95L1187.39 727.76L1186.25 726.32L1185.46 724.72L1185.07 723.09L1185.1 721.52L1185.56 720.12L1186.4 719L1187.58 718.22M1275.47 608.54L1277.28 608.1L1279.31 608.23L1281.44 608.95L1283.51 610.19L1285.39 611.87L1286.94 613.88L1288.06 616.08L1288.67 618.32L1288.74 620.45L1288.25 622.33L1287.25 623.81L1285.79 624.82L1283.98 625.26L1281.95 625.13L1279.82 624.41L1277.75 623.17L1275.87 621.49L1274.32 619.48L1273.2 617.28L1272.59 615.04L1272.52 612.91L1273.01 611.04L1274.01 609.55L1275.47 608.54M1276.71 610.5L1278.15 610.13L1279.75 610.2L1281.42 610.72L1283.04 611.65L1284.49 612.91L1285.68 614.44L1286.52 616.12L1286.96 617.83L1286.97 619.47L1286.55 620.91L1285.73 622.07L1284.55 622.86L1283.11 623.23L1281.51 623.16L1279.84 622.64L1278.22 621.71L1276.77 620.45L1275.58 618.92L1274.74 617.25L1274.3 615.53L1274.29 613.89L1274.71 612.45L1275.53 611.29L1276.71 610.5M1278.45 625.99L1282.81 607.37M1300.53 640.01L1299.96 634.01L1287.34 639.62M1291.47 646.12L1284.24 634.73M1303.2 652.17L1305.01 651.73L1307.04 651.86L1309.17 652.58L1311.24 653.82L1313.12 655.5L1314.67 657.51L1315.79 659.71L1316.4 661.95L1316.47 664.08L1315.99 665.96L1314.98 667.44L1313.52 668.45L1311.72 668.89L1309.68 668.76L1307.55 668.04L1305.48 666.8L1303.61 665.12L1302.05 663.11L1300.93 660.91L1300.32 658.67L1300.25 656.54L1300.74 654.67L1301.74 653.18L1303.2 652.17M1304.64 654.45L1306.08 654.07L1307.67 654.12L1309.3 654.58L1310.87 655.44L1312.27 656.63L1313.41 658.07L1314.2 659.66L1314.59 661.3L1314.56 662.87L1314.1 664.26L1313.26 665.39L1312.08 666.17L1310.65 666.55L1309.06 666.5L1307.42 666.04L1305.85 665.18L1304.45 663.99L1303.32 662.55L1302.53 660.96L1302.13 659.32L1302.17 657.75L1302.62 656.36L1303.47 655.23L1304.64 654.45M1316.14 673.89L1317.95 673.44L1319.99 673.58L1322.11 674.29L1324.18 675.53L1326.06 677.22L1327.61 679.23L1328.73 681.43L1329.35 683.67L1329.41 685.8L1328.93 687.67L1327.92 689.16L1326.46 690.16L1324.66 690.61L1322.62 690.47L1320.49 689.76L1318.42 688.52L1316.55 686.84L1315 684.83L1313.87 682.63L1313.26 680.39L1313.19 678.26L1313.68 676.38L1314.68 674.89L1316.14 673.89M1317.59 676.17L1319.02 675.79L1320.61 675.83L1322.24 676.3L1323.81 677.16L1325.21 678.35L1326.35 679.79L1327.14 681.38L1327.53 683.02L1327.5 684.58L1327.04 685.98L1326.2 687.11L1325.02 687.89L1323.59 688.27L1322 688.22L1320.36 687.75L1318.79 686.9L1317.39 685.71L1316.26 684.27L1315.47 682.68L1315.07 681.04L1315.11 679.47L1315.56 678.08L1316.41 676.95L1317.59 676.17M737.1 77.01L739.87 70.09L742.64 80.93L745.42 74.01L748.19 84.85L750.96 77.93L753.74 88.76L756.51 81.85L759.28 92.68L762.06 85.76L764.83 96.6L767.6 89.68L770.38 100.52L773.15 93.6L775.92 104.44L778.69 97.52L781.47 108.35L784.24 101.44L787.01 112.27L789.79 105.35L792.56 116.19L795.33 109.27L798.11 120.11L800.88 113.19L803.65 124.03L806.43 117.11L809.2 127.94L811.97 121.03L814.75 131.86M737.1 77.75L817.7 134.69M815.85 137.82L815.85 121.55M708.7 814.22L701.31 786.43L693.91 803.77M705.74 804.23L696.87 797.96M714.1 805.27L714.35 802.53L715.09 800.33L716.26 798.82L717.8 798.11L719.58 798.25L721.49 799.21L723.41 800.95L725.19 803.34L726.72 806.21L727.9 809.38L728.64 812.62L728.89 815.72L728.64 818.46L727.9 820.66L726.72 822.17L725.19 822.88L723.41 822.74L721.49 821.78L719.58 820.04L717.8 817.65L716.26 814.78L715.09 811.61L714.35 808.37L714.1 805.27M716.17 806.73L716.35 804.53L716.88 802.73L717.73 801.45L718.83 800.8L720.12 800.8L721.49 801.47L722.87 802.75L724.16 804.56L725.26 806.77L726.11 809.24L726.64 811.79L726.82 814.26L726.64 816.46L726.11 818.26L725.26 819.54L724.16 820.19L722.87 820.19L721.49 819.52L720.12 818.24L718.83 816.43L717.73 814.22L716.88 811.75L716.35 809.2L716.17 806.73M754.99 840.45L740.2 807.44M754.99 817.89L740.2 830M745.38 822.38L745.46 821.26L745.68 820.33L746.03 819.64L746.49 819.25L747.02 819.18L747.6 819.43L748.17 819.99L748.71 820.82L749.17 821.86L749.52 823.04L749.74 824.29L749.82 825.51L749.74 826.62L749.52 827.56L749.17 828.24L748.71 828.63L748.17 828.71L747.6 828.45L747.02 827.9L746.49 827.07L746.03 826.02L745.68 824.84L745.46 823.6L745.38 822.38M762.09 836.36L762.34 833.62L763.08 831.42L764.26 829.92L765.79 829.21L767.57 829.34L769.49 830.31L771.4 832.04L773.19 834.43L774.72 837.31L775.89 840.47L776.63 843.71L776.88 846.81L776.63 849.55L775.89 851.75L774.72 853.26L773.19 853.97L771.4 853.84L769.49 852.87L767.57 851.13L765.79 848.74L764.26 845.87L763.08 842.7L762.34 839.46L762.09 836.36M764.16 837.83L764.34 835.62L764.88 833.82L765.72 832.55L766.83 831.89L768.11 831.9L769.49 832.56L770.87 833.84L772.15 835.65L773.25 837.87L774.1 840.33L774.63 842.89L774.81 845.35L774.63 847.56L774.1 849.36L773.25 850.63L772.15 851.28L770.87 851.28L769.49 850.61L768.11 849.33L766.83 847.52L765.72 845.31L764.88 842.84L764.34 840.29L764.16 837.83" stroke="#d98a1c" stroke-width="1.1" fill="none"/><path d="M688.03 686.63L678.38 738.25M685.48 610.85L675.83 662.47M682.93 535.08L673.28 586.7M691.47 467.15L670.73 510.93M688.92 391.37L668.18 435.16M686.37 315.6L665.62 359.38M683.82 239.83L663.07 283.61M681.27 164.06L660.52 207.84M678.71 88.28L657.97 132.07M656.53 57.08L667.4 81M693.7 764.1L700.4 789.4M729.1 806.2L734.1 806.2M682.7 690L682.7 742.2" stroke="#f4a03c" stroke-width="1" fill="none"/><path d="M664.5 81L785 489L900 549L999.5 594.7L1152 639L1163.5 656.7L1296 696.8M711.4 840.8L1296 706M906 750L1066 761M1030 722L1192 718M1171.7 673.2L1296 673.2" stroke="#f4a03c" stroke-width="1" fill="none"/>
    <linearGradient id="xg" gradientUnits="userSpaceOnUse" x1="733.4" y1="857" x2="1103" y2="1118"><stop offset="0" stop-color="#ff4a1a"/><stop offset="1" stop-color="#f39a1a"/></linearGradient>
    <path d="M733.4 857L1103 1118" stroke="url(#xg)" stroke-width="1.2"/>
    <path d="M733.4 857L733.4 672" stroke="#22ee22" stroke-width="1.3"/>
    <path d="M733.4 857L458 1051" stroke="#3355ff" stroke-width="1"/>
    <path d="M674 867.5L712 841" stroke="#4a4a4a" stroke-width="3.5"/>
  </g>
  <linearGradient id="tshadow" x1="0" y1="0" x2="0" y2="1"><stop offset="0" stop-color="#000" stop-opacity="0.12"/><stop offset="1" stop-color="#000" stop-opacity="0"/></linearGradient><rect x="458" y="81" width="838" height="4" fill="url(#tshadow)"/>
</svg>
<div class="abs" style="left:458px;top:81px;width:8px;height:988px;background:linear-gradient(to right,rgba(0,0,0,0.16),rgba(0,0,0,0))"></div>
<div id="panel" class="abs">
  <div id="phead" class="abs">
    <svg class="abs" style="left:0;top:0" width="40" height="36" viewBox="8 83 40 36"><path d="M26 97.8H20.2V108H30.8V102" stroke="#333" stroke-width="2" fill="none" stroke-linejoin="round"/><path d="M24.3 104.3L25.2 100.6L33.4 92.6Q34.3 91.9 35.2 92.7L36.5 94Q37.2 94.8 36.5 95.6L28.3 103.5Z" fill="#333"/></svg>
    <div class="abs" style="left:37.5px;top:8.5px;font-size:16.3px;color:#666">GCode File</div>
    <svg class="abs" style="left:420px;top:12px" width="18" height="11" viewBox="0 0 18 11"><path d="M2 9L9 2L16 9" stroke="#222" stroke-width="1.6" fill="none"/></svg>
  </div>
  <div id="gutter" class="abs"></div>
  <div id="code" class="abs">
<div><span class="ln">1</span><span class="tx">; LightBurn <b>1.2.01</b></span></div>
<div><span class="ln">2</span><span class="tx">; GRBL device profile, absolute coords</span></div>
<div><span class="ln">3</span><span class="tx">; Bounds: X<b>-0</b> Y<b>0</b> to X<b>420</b> Y<b>400</b></span></div>
<div><span class="ln">4</span><span class="tx"></span></div>
<div><span class="ln">5</span><span class="tx">;USER START SCRIPT</span></div>
<div><span class="ln">6</span><span class="tx"><b>M106</b> S<b>0</b></span></div>
<div><span class="ln">7</span><span class="tx">;USER START SCRIPT</span></div>
<div><span class="ln">8</span><span class="tx"></span></div>
<div><span class="ln">9</span><span class="tx"><b>G00</b> <b>G17</b> <b>G40</b> <b>G21</b> <b>G54</b></span></div>
<div><span class="ln">10</span><span class="tx"><b>G90</b></span></div>
<div><span class="ln">11</span><span class="tx"><b>M4</b></span></div>
<div><span class="ln">12</span><span class="tx">; Cut @ <b>116.667</b> mm/sec, <b>80</b>% power</span></div>
<div><span class="ln">13</span><span class="tx"><b>M8</b></span></div>
<div class="act"><i class="sel"></i><i class="cur"></i><span class="ln">14</span><span class="tx"><b>G0</b> X<b>-6</b>Y<b>0</b></span></div>
<div><span class="ln">15</span><span class="tx">; Layer C<b>00</b></span></div>
<div><span class="ln">16</span><span class="tx"><b>G1</b> Y<b>200</b>S<b>800</b>F<b>7000.02</b></span></div>
<div><span class="ln">17</span><span class="tx"><b>G0</b> X<b>4</b>Y<b>200</b></span></div>
<div><span class="ln">18</span><span class="tx"><b>G1</b> Y<b>0</b></span></div>
<div><span class="ln">19</span><span class="tx"><b>G0</b> X<b>14</b>Y<b>0</b></span></div>
<div><span class="ln">20</span><span class="tx"><b>G1</b> Y<b>200</b></span></div>
<div><span class="ln">21</span><span class="tx"><b>G0</b> X<b>24</b>Y<b>200</b></span></div>
<div><span class="ln">22</span><span class="tx"><b>G1</b> Y<b>0</b></span></div>
<div><span class="ln">23</span><span class="tx"><b>G0</b> X<b>34</b>Y<b>0</b></span></div>
<div><span class="ln">24</span><span class="tx"><b>G1</b> Y<b>200</b></span></div>
<div><span class="ln">25</span><span class="tx"><b>G0</b> X<b>44</b>Y<b>200</b></span></div>
<div><span class="ln">26</span><span class="tx"><b>G1</b> Y<b>0</b></span></div>
<div><span class="ln">27</span><span class="tx"><b>G0</b> X<b>54</b>Y<b>0</b></span></div>
<div><span class="ln">28</span><span class="tx"><b>G1</b> Y<b>200</b></span></div>
<div><span class="ln">29</span><span class="tx"><b>G0</b> X<b>64</b>Y<b>200</b></span></div>
<div><span class="ln">30</span><span class="tx"><b>G1</b> Y<b>0</b></span></div>
<div><span class="ln">31</span><span class="tx"><b>G0</b> X<b>74</b>Y<b>0</b></span></div>
<div><span class="ln">32</span><span class="tx"><b>G1</b> Y<b>200</b></span></div>
<div><span class="ln">33</span><span class="tx"><b>G0</b> X<b>84</b>Y<b>200</b></span></div>
<div><span class="ln">34</span><span class="tx"><b>G1</b> Y<b>0</b></span></div>
<div><span class="ln">35</span><span class="tx"><b>G0</b> X<b>94</b>Y<b>0</b></span></div>
<div><span class="ln">36</span><span class="tx"><b>G1</b> Y<b>200</b></span></div>
<div><span class="ln">37</span><span class="tx"><b>G0</b> X<b>104</b>Y<b>200</b></span></div>
<div><span class="ln">38</span><span class="tx"><b>G1</b> Y<b>0</b></span></div>
<div><span class="ln">39</span><span class="tx"><b>G0</b> X<b>114</b>Y<b>0</b></span></div>
<div><span class="ln">40</span><span class="tx"><b>G1</b> Y<b>200</b></span></div>
<div><span class="ln">41</span><span class="tx"><b>G0</b> X<b>109</b>Y<b>202.5</b></span></div>
<div><span class="ln">42</span><span class="tx"><b>G1</b> Y<b>202.445</b></span></div>
<div><span class="ln">43</span><span class="tx"><b>G1</b> Y<b>197.5</b></span></div>
<div><span class="ln">44</span><span class="tx"><b>G0</b> X<b>119</b>Y<b>197.5</b></span></div>
<div><span class="ln">45</span><span class="tx"><b>G1</b> Y<b>202.453</b></span></div>
<div><span class="ln">46</span><span class="tx"><b>G1</b> Y<b>202.5</b></span></div>
<div><span class="ln">47</span><span class="tx"><b>G0</b> X<b>124</b>Y<b>200</b></span></div>
<div><span class="ln">48</span><span class="tx"><b>G1</b> Y<b>0</b></span></div>
<div><span class="ln">49</span><span class="tx"><b>G0</b> X<b>134</b>Y<b>0</b></span></div>
<div><span class="ln">50</span><span class="tx"><b>G1</b> Y<b>200</b></span></div>
<div><span class="ln">51</span><span class="tx"><b>G0</b> X<b>129</b>Y<b>202.5</b></span></div>
<div><span class="ln">52</span><span class="tx"><b>G1</b> Y<b>202.445</b></span></div>
<div><span class="ln">53</span><span class="tx"><b>G1</b> Y<b>197.5</b></span></div>
<div><span class="ln">54</span><span class="tx"><b>G0</b> X<b>139</b>Y<b>197.5</b></span></div>
<div><span class="ln">55</span><span class="tx"><b>G1</b> Y<b>202.453</b></span></div>
<div><span class="ln">56</span><span class="tx"><b>G1</b> Y<b>202.5</b></span></div>
<div><span class="ln">57</span><span class="tx"><b>G0</b> X<b>144</b>Y<b>200</b></span></div>
<div><span class="ln">58</span><span class="tx"><b>G1</b> Y<b>0</b></span></div>
<div><span class="ln">59</span><span class="tx"><b>G0</b> X<b>154</b>Y<b>0</b></span></div>
<div><span class="ln">60</span><span class="tx"><b>G1</b> Y<b>200</b></span></div>
<div><span class="ln">61</span><span class="tx"><b>G0</b> X<b>149</b>Y<b>202.5</b></span></div>
<div><span class="ln">62</span><span class="tx"><b>G1</b> Y<b>202.445</b></span></div>
<div><span class="ln">63</span><span class="tx"><b>G1</b> Y<b>197.5</b></span></div>
<div><span class="ln">64</span><span class="tx"><b>G0</b> X<b>159</b>Y<b>197.5</b></span></div>
<div><span class="ln">65</span><span class="tx"><b>G1</b> Y<b>202.453</b></span></div>
<div><span class="ln">66</span><span class="tx"><b>G1</b> Y<b>202.5</b></span></div>
<div><span class="ln">67</span><span class="tx"><b>G0</b> X<b>164</b>Y<b>200</b></span></div>
<div><span class="ln">68</span><span class="tx"><b>G1</b> Y<b>0</b></span></div>
<div><span class="ln">69</span><span class="tx"><b>G0</b> X<b>174</b>Y<b>0</b></span></div>
<div><span class="ln">70</span><span class="tx"><b>G1</b> Y<b>200</b></span></div>
<div><span class="ln">71</span><span class="tx"><b>G0</b> X<b>169</b>Y<b>202.5</b></span></div>
<div><span class="ln">72</span><span class="tx"><b>G1</b> Y<b>202.445</b></span></div>
<div><span class="ln">73</span><span class="tx"><b>G1</b> Y<b>197.5</b></span></div>
  </div>
  <div id="sbar" class="abs"><svg class="abs" style="left:4px;top:5.5px" width="9" height="6"><path d="M0.5 5.5L4.5 1L8.5 5.5Z" fill="#a3a3a3"/></svg><div id="thumb" class="abs"></div></div>
  <div class="abs btn" style="left:284px;width:54px;background:#74a6ea"><div class="abs" style="left:10px;top:7px;font-size:12px;font-weight:bold;color:#fff;letter-spacing:0.5px">PLOT</div></div>
  <div class="abs btn" style="left:346px;width:34px;background:#ec7770"><div class="abs" style="left:11px;top:8px;width:12px;height:12px;border:2px solid #fff;border-radius:50%"></div></div>
  <div class="abs btn" style="left:388px;width:33px;background:#6e6f71"><div class="abs" style="left:11px;top:8px;width:11px;height:11px;background:#fff;border-radius:50%"></div></div>
</div>
<svg class="abs" style="left:0;top:0" width="1296" height="1069" viewBox="0 0 1296 1069">
  <defs><filter id="sh" x="-20%" y="-20%" width="140%" height="140%"><feGaussianBlur in="SourceAlpha" stdDeviation="1.2"/><feOffset dx="2" dy="2"/><feComponentTransfer><feFuncA type="linear" slope="0.45"/></feComponentTransfer><feMerge><feMergeNode/><feMergeNode in="SourceGraphic"/></feMerge></filter></defs>
  <g filter="url(#sh)">
   <path d="M281.9 441.4L157 305" stroke="#ff0000" stroke-width="3" fill="none"/>
   <path d="M148.3 295.9L163.6 304.4L154.4 312.8Z" fill="#ff0000"/>
   <path d="M389.5 508.7L655 852" stroke="#ff0000" stroke-width="3" fill="none"/>
   <path d="M663.4 863.9L648.6 854.2L657.6 847.2Z" fill="#ff0000"/>
   <rect x="276.5" y="449.5" width="206" height="39" fill="#ffff9e" stroke="#e6e69a" stroke-width="1"/>
  </g>
  <text x="298" y="479" font-family="Liberation Sans" font-size="31" letter-spacing="-0.5" fill="#ff0000">move to X-6</text>
</svg>
</body></html>
